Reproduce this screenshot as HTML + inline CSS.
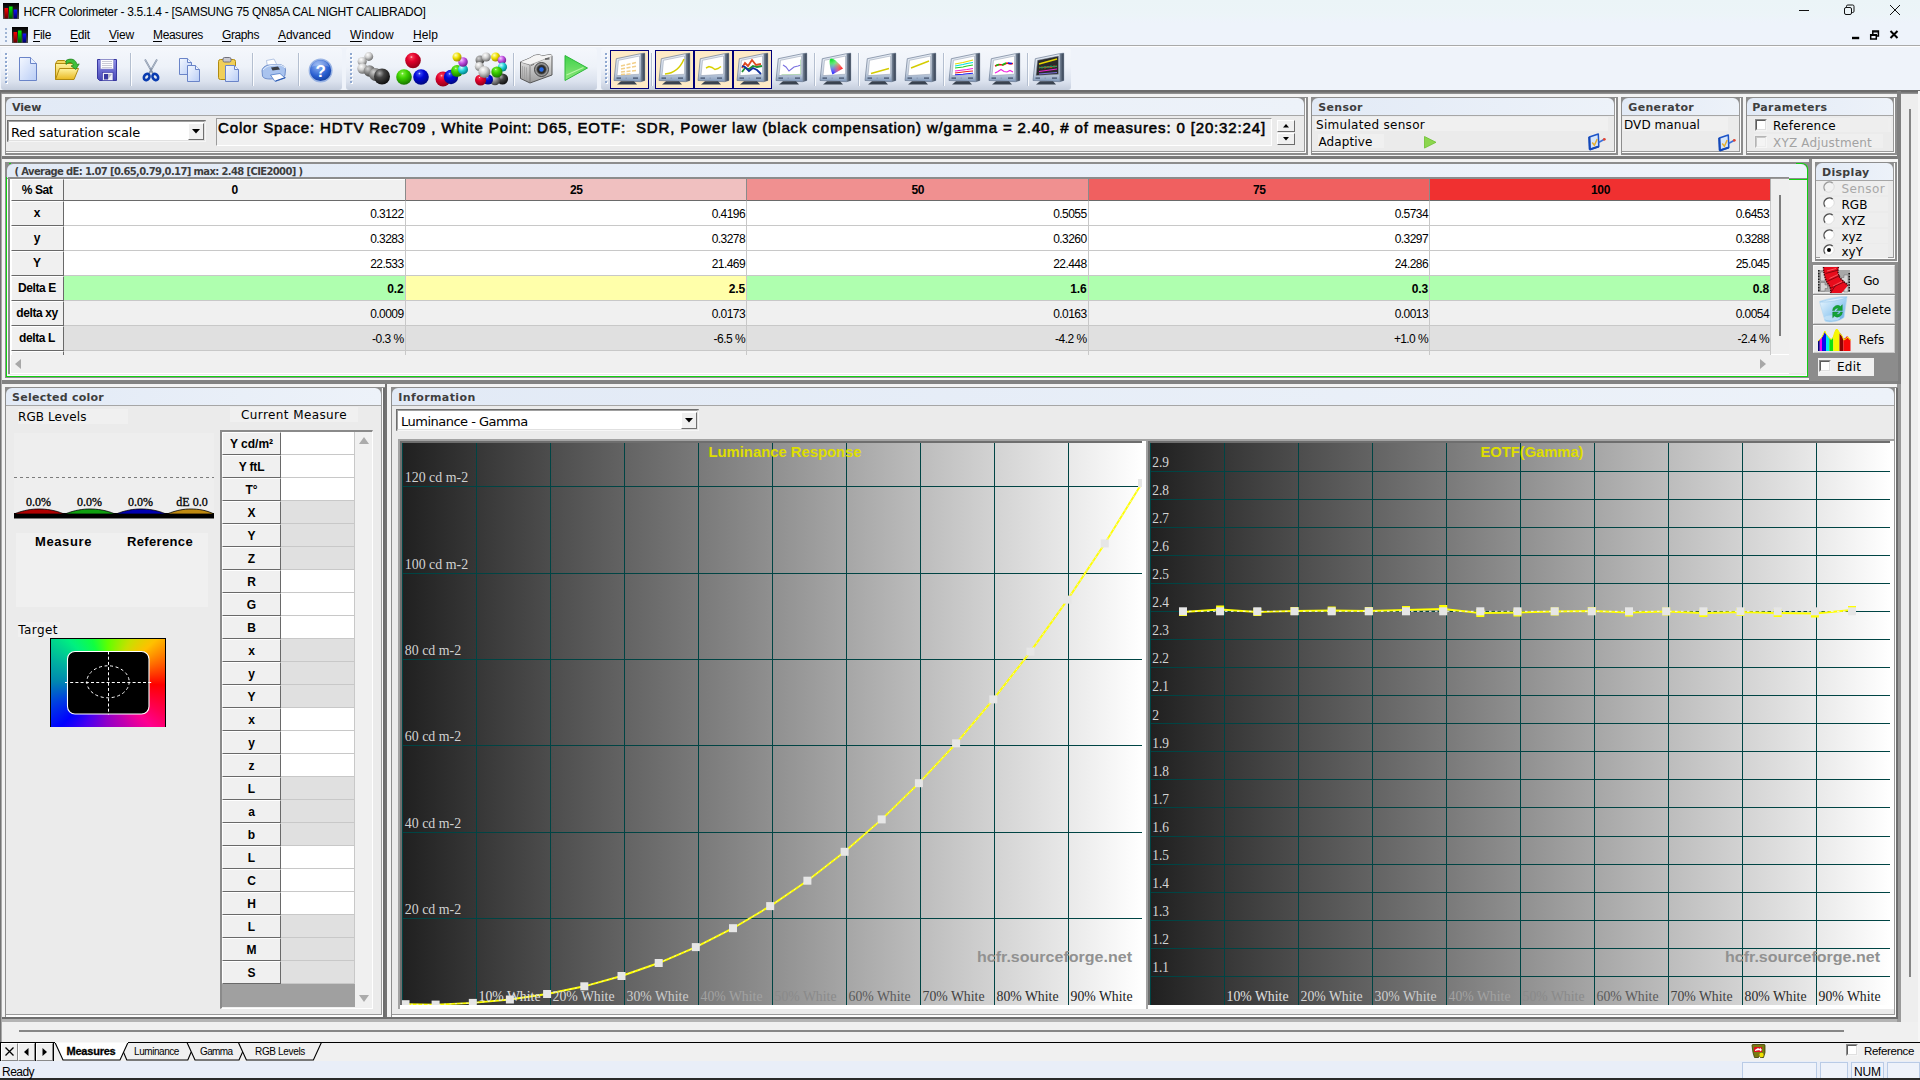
<!DOCTYPE html><html><head><meta charset="utf-8"><title>HCFR Colorimeter</title><style>html,body{margin:0;padding:0;width:1920px;height:1080px;overflow:hidden;background:#f0f0f0;}body{position:relative;font-family:"Liberation Sans",sans-serif;}#app{position:absolute;left:0;top:0;width:1920px;height:1080px;overflow:hidden;}#app>div,#app>span,#app>svg{position:absolute;display:block;}svg{overflow:visible}</style></head><body><div id="app">
<div style="left:0px;top:0px;width:1920px;height:23px;background:linear-gradient(#ebf4f7 0%,#ecf4f8 60%,#eef3fb 100%);"></div>
<svg style="left:3px;top:3px" width="16" height="16" viewBox="0 0 16 16"><defs><linearGradient id="ig" x1="0" y1="0" x2="0" y2="1"><stop offset="0" stop-color="#000"/><stop offset="0.5" stop-color="#222"/><stop offset="1" stop-color="#555"/></linearGradient><linearGradient id="ir" x1="0" y1="0" x2="0" y2="1"><stop offset="0" stop-color="#f00"/><stop offset="1" stop-color="#600"/></linearGradient><linearGradient id="igr" x1="0" y1="0" x2="0" y2="1"><stop offset="0" stop-color="#0e0"/><stop offset="1" stop-color="#050"/></linearGradient><linearGradient id="ib" x1="0" y1="0" x2="0" y2="1"><stop offset="0" stop-color="#11f"/><stop offset="1" stop-color="#006"/></linearGradient></defs><rect width="16" height="16" fill="url(#ig)"/><rect x="1.5" y="5" width="3.6" height="10.5" fill="url(#ir)"/><rect x="6" y="3.5" width="3.6" height="12" fill="url(#igr)"/><rect x="10.6" y="6.5" width="3.6" height="9" fill="url(#ib)"/></svg>
<span style="left:23.50px;top:4.00px;font:12px/17px 'Liberation Sans',sans-serif;color:#000;white-space:pre;letter-spacing:-0.300px;">HCFR Colorimeter - 3.5.1.4 - [SAMSUNG 75 QN85A CAL NIGHT CALIBRADO]</span>
<svg style="left:1790px;top:0" width="130" height="23" viewBox="0 0 130 23" fill="none" stroke="#111" stroke-width="1"><path d="M9 10.5h10"/><rect x="54.5" y="7.5" width="7" height="7" rx="1.5"/><path d="M56.5 7.500v-1.200a1.300 1.300 0 0 1 1.300-1.300h4.900a1.300 1.300 0 0 1 1.300 1.300v4.900a1.300 1.300 0 0 1-1.300 1.300h-1.200"/><path d="M100 5l10 10M110 5l-10 10"/></svg>
<div style="left:0px;top:23px;width:1920px;height:23px;background:#eef3fb;"></div>
<div style="left:0px;top:45px;width:1920px;height:1px;background:#a9a9a9;"></div>
<div style="left:0px;top:46px;width:1920px;height:1px;background:#fdfdfe;"></div>
<div style="left:5px;top:28px;width:2px;height:2px;background:#9fb4d4;"></div>
<div style="left:5px;top:32px;width:2px;height:2px;background:#9fb4d4;"></div>
<div style="left:5px;top:36px;width:2px;height:2px;background:#9fb4d4;"></div>
<div style="left:5px;top:40px;width:2px;height:2px;background:#9fb4d4;"></div>
<svg style="left:12px;top:27px" width="16" height="16" viewBox="0 0 16 16"><defs><linearGradient id="ig" x1="0" y1="0" x2="0" y2="1"><stop offset="0" stop-color="#000"/><stop offset="0.5" stop-color="#222"/><stop offset="1" stop-color="#555"/></linearGradient><linearGradient id="ir" x1="0" y1="0" x2="0" y2="1"><stop offset="0" stop-color="#f00"/><stop offset="1" stop-color="#600"/></linearGradient><linearGradient id="igr" x1="0" y1="0" x2="0" y2="1"><stop offset="0" stop-color="#0e0"/><stop offset="1" stop-color="#050"/></linearGradient><linearGradient id="ib" x1="0" y1="0" x2="0" y2="1"><stop offset="0" stop-color="#11f"/><stop offset="1" stop-color="#006"/></linearGradient></defs><rect width="16" height="16" fill="url(#ig)"/><rect x="1.5" y="5" width="3.6" height="10.5" fill="url(#ir)"/><rect x="6" y="3.5" width="3.6" height="12" fill="url(#igr)"/><rect x="10.6" y="6.5" width="3.6" height="9" fill="url(#ib)"/></svg>
<span style="left:33.00px;top:27.00px;font:12px/17px 'Liberation Sans',sans-serif;color:#000;white-space:pre;letter-spacing:-0.334px;">File</span>
<div style="left:33px;top:41px;width:7px;height:1px;background:#000;"></div>
<span style="left:70.00px;top:27.00px;font:12px/17px 'Liberation Sans',sans-serif;color:#000;white-space:pre;letter-spacing:-0.170px;">Edit</span>
<div style="left:70px;top:41px;width:8px;height:1px;background:#000;"></div>
<span style="left:109.00px;top:27.00px;font:12px/17px 'Liberation Sans',sans-serif;color:#000;white-space:pre;letter-spacing:-0.199px;">View</span>
<div style="left:109px;top:41px;width:8px;height:1px;background:#000;"></div>
<span style="left:153.00px;top:27.00px;font:12px/17px 'Liberation Sans',sans-serif;color:#000;white-space:pre;letter-spacing:-0.336px;">Measures</span>
<div style="left:153px;top:41px;width:9px;height:1px;background:#000;"></div>
<span style="left:222.00px;top:27.00px;font:12px/17px 'Liberation Sans',sans-serif;color:#000;white-space:pre;letter-spacing:-0.392px;">Graphs</span>
<div style="left:222px;top:41px;width:9px;height:1px;background:#000;"></div>
<span style="left:278.00px;top:27.00px;font:12px/17px 'Liberation Sans',sans-serif;color:#000;white-space:pre;letter-spacing:-0.047px;">Advanced</span>
<div style="left:278px;top:41px;width:8px;height:1px;background:#000;"></div>
<span style="left:350.00px;top:27.00px;font:12px/17px 'Liberation Sans',sans-serif;color:#000;white-space:pre;letter-spacing:0.220px;">Window</span>
<div style="left:350px;top:41px;width:12px;height:1px;background:#000;"></div>
<span style="left:413.00px;top:27.00px;font:12px/17px 'Liberation Sans',sans-serif;color:#000;white-space:pre;letter-spacing:0.080px;">Help</span>
<div style="left:413px;top:41px;width:9px;height:1px;background:#000;"></div>
<svg style="left:1848px;top:26px" width="60" height="18" viewBox="0 0 60 18" fill="none" stroke="#000" stroke-width="2"><path d="M4 12h7.200" stroke-width="2.400"/><path d="M22.700 8.700h5.600v4.300h-5.600z" stroke-width="1.500"/><path d="M24.800 8.300v-3.200h5.600v4.800h-1.800" stroke-width="1.500"/><path d="M22.700 9.400h5.600M24.800 5.800h5.600" stroke-width="1.300"/><path d="M42.5 5l7 7M49.5 5l-7 7"/></svg>
<div style="left:0px;top:47px;width:1920px;height:44px;background:#eff3fa;"></div>
<div style="left:1px;top:48px;width:341px;height:42px;background:linear-gradient(#f4f7fc 0%,#eef2f9 45%,#dbe2ee 80%,#c4cddc 100%);border-radius:3px 3px 3px 3px;"></div>
<div style="left:6px;top:54px;width:2px;height:2px;background:#fff;"></div>
<div style="left:5px;top:53px;width:2px;height:2px;background:#8fa8d0;"></div>
<div style="left:6px;top:58px;width:2px;height:2px;background:#fff;"></div>
<div style="left:5px;top:57px;width:2px;height:2px;background:#8fa8d0;"></div>
<div style="left:6px;top:62px;width:2px;height:2px;background:#fff;"></div>
<div style="left:5px;top:61px;width:2px;height:2px;background:#8fa8d0;"></div>
<div style="left:6px;top:66px;width:2px;height:2px;background:#fff;"></div>
<div style="left:5px;top:65px;width:2px;height:2px;background:#8fa8d0;"></div>
<div style="left:6px;top:70px;width:2px;height:2px;background:#fff;"></div>
<div style="left:5px;top:69px;width:2px;height:2px;background:#8fa8d0;"></div>
<div style="left:6px;top:74px;width:2px;height:2px;background:#fff;"></div>
<div style="left:5px;top:73px;width:2px;height:2px;background:#8fa8d0;"></div>
<div style="left:6px;top:78px;width:2px;height:2px;background:#fff;"></div>
<div style="left:5px;top:77px;width:2px;height:2px;background:#8fa8d0;"></div>
<div style="left:6px;top:82px;width:2px;height:2px;background:#fff;"></div>
<div style="left:5px;top:81px;width:2px;height:2px;background:#8fa8d0;"></div>
<div style="left:346px;top:48px;width:251px;height:42px;background:linear-gradient(#f4f7fc 0%,#eef2f9 45%,#dbe2ee 80%,#c4cddc 100%);border-radius:3px 3px 3px 3px;"></div>
<div style="left:351px;top:54px;width:2px;height:2px;background:#fff;"></div>
<div style="left:350px;top:53px;width:2px;height:2px;background:#8fa8d0;"></div>
<div style="left:351px;top:58px;width:2px;height:2px;background:#fff;"></div>
<div style="left:350px;top:57px;width:2px;height:2px;background:#8fa8d0;"></div>
<div style="left:351px;top:62px;width:2px;height:2px;background:#fff;"></div>
<div style="left:350px;top:61px;width:2px;height:2px;background:#8fa8d0;"></div>
<div style="left:351px;top:66px;width:2px;height:2px;background:#fff;"></div>
<div style="left:350px;top:65px;width:2px;height:2px;background:#8fa8d0;"></div>
<div style="left:351px;top:70px;width:2px;height:2px;background:#fff;"></div>
<div style="left:350px;top:69px;width:2px;height:2px;background:#8fa8d0;"></div>
<div style="left:351px;top:74px;width:2px;height:2px;background:#fff;"></div>
<div style="left:350px;top:73px;width:2px;height:2px;background:#8fa8d0;"></div>
<div style="left:351px;top:78px;width:2px;height:2px;background:#fff;"></div>
<div style="left:350px;top:77px;width:2px;height:2px;background:#8fa8d0;"></div>
<div style="left:351px;top:82px;width:2px;height:2px;background:#fff;"></div>
<div style="left:350px;top:81px;width:2px;height:2px;background:#8fa8d0;"></div>
<div style="left:601px;top:48px;width:470px;height:42px;background:linear-gradient(#f4f7fc 0%,#eef2f9 45%,#dbe2ee 80%,#c4cddc 100%);border-radius:3px 3px 3px 3px;"></div>
<div style="left:606px;top:54px;width:2px;height:2px;background:#fff;"></div>
<div style="left:605px;top:53px;width:2px;height:2px;background:#8fa8d0;"></div>
<div style="left:606px;top:58px;width:2px;height:2px;background:#fff;"></div>
<div style="left:605px;top:57px;width:2px;height:2px;background:#8fa8d0;"></div>
<div style="left:606px;top:62px;width:2px;height:2px;background:#fff;"></div>
<div style="left:605px;top:61px;width:2px;height:2px;background:#8fa8d0;"></div>
<div style="left:606px;top:66px;width:2px;height:2px;background:#fff;"></div>
<div style="left:605px;top:65px;width:2px;height:2px;background:#8fa8d0;"></div>
<div style="left:606px;top:70px;width:2px;height:2px;background:#fff;"></div>
<div style="left:605px;top:69px;width:2px;height:2px;background:#8fa8d0;"></div>
<div style="left:606px;top:74px;width:2px;height:2px;background:#fff;"></div>
<div style="left:605px;top:73px;width:2px;height:2px;background:#8fa8d0;"></div>
<div style="left:606px;top:78px;width:2px;height:2px;background:#fff;"></div>
<div style="left:605px;top:77px;width:2px;height:2px;background:#8fa8d0;"></div>
<div style="left:606px;top:82px;width:2px;height:2px;background:#fff;"></div>
<div style="left:605px;top:81px;width:2px;height:2px;background:#8fa8d0;"></div>
<div style="left:130px;top:53px;width:1px;height:33px;background:#b4bfd0;"></div>
<div style="left:131px;top:53px;width:1px;height:33px;background:#fbfcfe;"></div>
<div style="left:252px;top:53px;width:1px;height:33px;background:#b4bfd0;"></div>
<div style="left:253px;top:53px;width:1px;height:33px;background:#fbfcfe;"></div>
<div style="left:298px;top:53px;width:1px;height:33px;background:#b4bfd0;"></div>
<div style="left:299px;top:53px;width:1px;height:33px;background:#fbfcfe;"></div>
<div style="left:513px;top:53px;width:1px;height:33px;background:#b4bfd0;"></div>
<div style="left:514px;top:53px;width:1px;height:33px;background:#fbfcfe;"></div>
<div style="left:651px;top:53px;width:1px;height:33px;background:#b4bfd0;"></div>
<div style="left:652px;top:53px;width:1px;height:33px;background:#fbfcfe;"></div>
<div style="left:814px;top:53px;width:1px;height:33px;background:#b4bfd0;"></div>
<div style="left:815px;top:53px;width:1px;height:33px;background:#fbfcfe;"></div>
<div style="left:858px;top:53px;width:1px;height:33px;background:#b4bfd0;"></div>
<div style="left:859px;top:53px;width:1px;height:33px;background:#fbfcfe;"></div>
<div style="left:943px;top:53px;width:1px;height:33px;background:#b4bfd0;"></div>
<div style="left:944px;top:53px;width:1px;height:33px;background:#fbfcfe;"></div>
<div style="left:1027px;top:53px;width:1px;height:33px;background:#b4bfd0;"></div>
<div style="left:1028px;top:53px;width:1px;height:33px;background:#fbfcfe;"></div>
<div style="left:0px;top:90px;width:1920px;height:1px;background:#6e6e6e;"></div>
<svg width="0" height="0" style="left:0;top:0"><defs>
<linearGradient id="pg" x1="0" y1="0" x2="1" y2="1"><stop offset="0" stop-color="#f4f8ff"/><stop offset="1" stop-color="#b9cdf6"/></linearGradient>
<linearGradient id="mb" x1="0" y1="0" x2="0" y2="1"><stop offset="0" stop-color="#e9eef5"/><stop offset="0.7" stop-color="#c9d4e3"/><stop offset="1" stop-color="#7f97b8"/></linearGradient>
<linearGradient id="ms" x1="0" y1="0" x2="1" y2="0"><stop offset="0" stop-color="#7f8da0"/><stop offset="1" stop-color="#2e3a4c"/></linearGradient>
<radialGradient id="bR" cx="0.4" cy="0.28" r="0.75"><stop offset="0" stop-color="#ffd0d8"/><stop offset="0.12" stop-color="#f4304c"/><stop offset="0.4" stop-color="#e0002c"/><stop offset="1" stop-color="#8c0018"/></radialGradient>
<radialGradient id="bG" cx="0.4" cy="0.28" r="0.75"><stop offset="0" stop-color="#e0ffd0"/><stop offset="0.12" stop-color="#70e830"/><stop offset="0.4" stop-color="#3cd000"/><stop offset="1" stop-color="#157000"/></radialGradient>
<radialGradient id="bB" cx="0.4" cy="0.28" r="0.75"><stop offset="0" stop-color="#d0d8ff"/><stop offset="0.12" stop-color="#3040f0"/><stop offset="0.4" stop-color="#0008d8"/><stop offset="1" stop-color="#000878"/></radialGradient>
<radialGradient id="bW" cx="0.38" cy="0.3" r="0.72"><stop offset="0" stop-color="#fff"/><stop offset="0.45" stop-color="#d0d0d0"/><stop offset="1" stop-color="#6c6c6c"/></radialGradient>
<radialGradient id="bK" cx="0.35" cy="0.3" r="0.7"><stop offset="0" stop-color="#aaa"/><stop offset="0.4" stop-color="#444"/><stop offset="1" stop-color="#111"/></radialGradient>
<radialGradient id="bM" cx="0.35" cy="0.3" r="0.7"><stop offset="0" stop-color="#d0d0d0"/><stop offset="0.5" stop-color="#888"/><stop offset="1" stop-color="#444"/></radialGradient>
<radialGradient id="bY" cx="0.35" cy="0.3" r="0.7"><stop offset="0" stop-color="#ffffc0"/><stop offset="0.5" stop-color="#f0e000"/><stop offset="1" stop-color="#a09000"/></radialGradient>
<radialGradient id="bP" cx="0.35" cy="0.3" r="0.7"><stop offset="0" stop-color="#f4c8ff"/><stop offset="0.5" stop-color="#c050e0"/><stop offset="1" stop-color="#702090"/></radialGradient>
<radialGradient id="bC" cx="0.35" cy="0.3" r="0.7"><stop offset="0" stop-color="#d0ffff"/><stop offset="0.5" stop-color="#20d0d8"/><stop offset="1" stop-color="#008088"/></radialGradient>
<radialGradient id="hq" cx="0.4" cy="0.3" r="0.75"><stop offset="0" stop-color="#8fb4f4"/><stop offset="0.6" stop-color="#2a5fd0"/><stop offset="1" stop-color="#103a98"/></radialGradient>
<linearGradient id="fl" x1="0" y1="0" x2="0" y2="1"><stop offset="0" stop-color="#fff3a0"/><stop offset="1" stop-color="#e8b820"/></linearGradient>
<linearGradient id="sv" x1="0" y1="0" x2="0" y2="1"><stop offset="0" stop-color="#8e8ee8"/><stop offset="1" stop-color="#4848b8"/></linearGradient>
<linearGradient id="gp" x1="0" y1="0" x2="0" y2="1"><stop offset="0" stop-color="#3fd24a"/><stop offset="1" stop-color="#8ee67a"/></linearGradient>
<linearGradient id="cam" x1="0" y1="0" x2="0" y2="1"><stop offset="0" stop-color="#f2f2f2"/><stop offset="1" stop-color="#9a9a9a"/></linearGradient>
</defs></svg>
<svg style="left:18px;top:56px" width="20" height="26" viewBox="0 0 20 26"><path d="M1.5 1.5h11l6 6v17h-17z" fill="url(#pg)" stroke="#6a84c8"/><path d="M12.5 1.5v6h6" fill="#e8f0ff" stroke="#6a84c8"/></svg>
<svg style="left:54px;top:57px" width="26" height="24" viewBox="0 0 26 24"><path d="M1.5 6.5l2-3h7l2 2h8v4" fill="#f4d860" stroke="#b08a10"/><path d="M1.5 22.5v-16h19l-0 4" fill="url(#fl)" stroke="#b08a10"/><path d="M1.5 22.5l4-11h19l-4.5 11z" fill="url(#fl)" stroke="#b08a10"/><path d="M12 3.5c5-3 10-1 11 4l2.2-.6-3.4 5.6-4.8-3.6 2.4-.5c-1-3-4-4-7.400-.9z" fill="#3fc03a" stroke="#1c7a1a" stroke-width=".7"/></svg>
<svg style="left:96px;top:58px" width="22" height="24" viewBox="0 0 22 24"><path d="M1.500 1.500h19v21h-17l-2-2z" fill="url(#sv)" stroke="#3838a0"/><rect x="4.500" y="1.500" width="13" height="9.500" fill="#fdfdff" stroke="#8c8cc8" stroke-width=".6"/><path d="M6 3.500h10M6 5.500h10M6 7.500h10M6 9.500h10" stroke="#b4b4c4" stroke-width=".7"/><rect x="6.500" y="14.500" width="10.500" height="8" fill="#f0f0f8" stroke="#3838a0" stroke-width=".6"/><path d="M8 16h4v5.500h-4z" fill="#3a3aa0"/><path d="M12 16h4l-4 5.500z" fill="#b8b8cc"/></svg>
<svg style="left:141px;top:57px" width="20" height="26" viewBox="0 0 20 26"><path d="M4 2.500l8.500 15M16 2.500l-8.500 15" stroke="#8290a6" stroke-width="1.700" fill="none"/><path d="M4 2.500l5 9M16 2.500l-5 9" stroke="#c4ccd8" stroke-width=".7" fill="none"/><ellipse cx="5.700" cy="20" rx="2.600" ry="3.300" fill="none" stroke="#0a3cb0" stroke-width="2.600" transform="rotate(35 5.700 20)"/><ellipse cx="14.300" cy="20" rx="2.600" ry="3.300" fill="none" stroke="#0a3cb0" stroke-width="2.600" transform="rotate(-35 14.300 20)"/></svg>
<svg style="left:178px;top:57px" width="24" height="26" viewBox="0 0 24 26"><path d="M1.500 1.500h8l4 4v12h-12z" fill="url(#pg)" stroke="#6a84c8"/><path d="M9.500 1.500v4h4" fill="#eef4ff" stroke="#6a84c8"/><path d="M9.500 8.500h8l4 4v12h-12z" fill="url(#pg)" stroke="#6a84c8"/><path d="M17.500 8.500v4h4" fill="#eef4ff" stroke="#6a84c8"/></svg>
<svg style="left:217px;top:56px" width="24" height="27" viewBox="0 0 24 27"><rect x="1.500" y="3.500" width="17" height="20" rx="2" fill="#f0cf58" stroke="#b08a10"/><rect x="6" y="1.500" width="8" height="4.500" rx="1.500" fill="#c8c8d0" stroke="#70707c"/><path d="M8.500 9.500h9l4 4v12h-13z" fill="url(#pg)" stroke="#6a84c8"/><path d="M17.500 9.500v4h4" fill="#eef4ff" stroke="#6a84c8"/></svg>
<svg style="left:261px;top:58px" width="26" height="25" viewBox="0 0 26 25"><path d="M6.500 9l-1-6.500 7.500-1.500 3.500 7z" fill="#fff" stroke="#9ab0d8" stroke-width=".7"/><path d="M1 13c0-3 3-5.500 7-6l9-.5c4 0 7.500 2 7.500 5.500l-.5 5c-.5 2-2 3-5 3.500l-10 .5c-4 0-7-1-7.500-3z" fill="#a9c3ee" stroke="#5a7cc0" stroke-width=".8"/><path d="M2 12c2-2.500 5-4 8-4.500l7-.5c3 0 5.500 1 7 3" fill="none" stroke="#e4eefc" stroke-width="1"/><path d="M10 9.500l7-1 2 3-7.500 1z" fill="#3c4048"/><path d="M9.500 17l9.500-1.500 5 4.500-10 3.500z" fill="#fff" stroke="#4a78c8" stroke-width=".8"/><path d="M14.500 23l10-3.500" stroke="#2a58b0" stroke-width="1.200"/></svg>
<svg style="left:308px;top:58px" width="25" height="25" viewBox="0 0 25 25"><circle cx="12.600" cy="12.500" r="11.300" fill="url(#hq)" stroke="#9ab4e4" stroke-width="1.400"/><path d="M3.500 9a9.500 9.500 0 0 1 18 0c-5-2.500-13-2.500-18 0z" fill="#fff" opacity=".22"/><text x="12.600" y="18.600" font-family="Liberation Sans,sans-serif" font-weight="bold" font-size="17" text-anchor="middle" fill="#fff">?</text></svg>
<svg style="left:357px;top:52px" width="34" height="34" viewBox="0 0 34 34"><circle cx="11.8" cy="4.5" r="4.4" fill="url(#bW)"/><circle cx="5.2" cy="9.5" r="4.6" fill="url(#bW)"/><circle cx="5.5" cy="16.5" r="5.2" fill="url(#bW)"/><circle cx="12.5" cy="19" r="5.8" fill="url(#bM)"/><circle cx="18.5" cy="22.5" r="6.4" fill="url(#bM)"/><circle cx="25" cy="24.5" r="8" fill="url(#bK)"/></svg>
<svg style="left:395px;top:52px" width="34" height="34" viewBox="0 0 34 34"><circle cx="18" cy="8.5" r="7.8" fill="url(#bR)"/><circle cx="9" cy="25" r="7.8" fill="url(#bG)"/><circle cx="26" cy="25" r="7.8" fill="url(#bB)"/></svg>
<svg style="left:434px;top:52px" width="36" height="34" viewBox="0 0 36 34"><circle cx="9" cy="27" r="7.5" fill="url(#bR)"/><circle cx="17" cy="25" r="7.2" fill="url(#bB)"/><circle cx="23" cy="19" r="6" fill="url(#bG)"/><circle cx="29" cy="17.5" r="5" fill="url(#bC)"/><circle cx="29" cy="10" r="4.8" fill="url(#bP)"/><circle cx="23" cy="5" r="4.5" fill="url(#bY)"/></svg>
<svg style="left:473px;top:52px" width="36" height="34" viewBox="0 0 36 34"><circle cx="7" cy="8" r="4.5" fill="url(#bM)"/><circle cx="13.2" cy="5" r="4.6" fill="url(#bW)"/><circle cx="22.6" cy="5" r="4.5" fill="url(#bY)"/><circle cx="28.9" cy="8" r="4.3" fill="url(#bP)"/><circle cx="29.5" cy="15" r="4.6" fill="url(#bC)"/><circle cx="29.5" cy="27" r="5.6" fill="url(#bK)"/><circle cx="22" cy="28" r="5.2" fill="url(#bM)"/><circle cx="23.9" cy="20" r="5.6" fill="url(#bG)"/><circle cx="15" cy="27.6" r="5" fill="url(#bB)"/><circle cx="7.6" cy="28" r="5.6" fill="url(#bR)"/><circle cx="6.4" cy="14.5" r="4.6" fill="url(#bW)"/><circle cx="11.4" cy="20" r="6" fill="url(#bW)"/></svg>
<svg style="left:519px;top:53px" width="34" height="32" viewBox="0 0 34 32"><path d="M1.500 9l9.500-4 4-2.500 5.500-1 2 1.500 9.500-1.500 1 1.500v19l-22 8-9.500-4.500z" fill="url(#cam)" stroke="#4a4a4a" stroke-width=".9"/><path d="M1.500 9l9.500 3v18" fill="none" stroke="#6a6a6a" stroke-width=".7"/><path d="M11 12l21-8.500" fill="none" stroke="#8a8a8a" stroke-width=".7"/><path d="M1.500 9l9.500-4 4-2.500 5.500-1 2 1.500 9.500-1.500 1 1.500-22 8.500z" fill="#f6f6f6" opacity=".9"/><path d="M3.500 13v12.500M5.500 13.700v12.500M7.500 14.400v12.600" stroke="#a0a0a0" stroke-width=".8"/><circle cx="22.500" cy="16.500" r="7" fill="#9a9a9a" stroke="#3a3a3a" stroke-width=".9"/><circle cx="22.500" cy="16.500" r="4.800" fill="#2c2c2c" stroke="#6a6a6a" stroke-width=".7"/><circle cx="22.500" cy="16.500" r="2.200" fill="#2468e8"/><rect x="26" y="4.800" width="4.500" height="2" fill="#666" transform="rotate(-9 28 6)"/><path d="M12 12.500l3-1.200" stroke="#777" stroke-width="1"/></svg>
<svg style="left:563px;top:54px" width="26" height="28" viewBox="0 0 26 28"><path d="M2 1.500l22.500 12.500-22.500 12.500z" fill="url(#gp)" stroke="#2cb83a" stroke-width="1"/><path d="M3.500 21l17-7.500" stroke="#b8f4a8" stroke-width="1.200" fill="none"/></svg>
<div style="left:610px;top:50px;width:39px;height:39px;background:#fdeac6;border:1.5px solid #000078;box-sizing:border-box;"></div>
<svg style="left:614px;top:53px" width="32" height="32" viewBox="0 0 32 32"><path d="M2.300 5.700l24.200-5 4.200-.5v27.300l-4.200 1.200-26.500-1.200z" fill="url(#mb)" stroke="#6b7b94" stroke-width=".7"/><path d="M26.500 .7l4.200-.5v27.300l-4.200 1.200z" fill="url(#ms)"/><path d="M4.500 7.300l21-4.300v18.200l-22.500 1.400z" fill="#fff" stroke="#8a96aa" stroke-width=".5"/><rect x="2.500" y="24.300" width="4.500" height="1.700" fill="#5a6a84"/><rect x="19" y="24.300" width="5" height="1.700" fill="#5a6a84"/><rect x="11.500" y="24.600" width="1.500" height="1.200" fill="#8a9ab4"/><path d="M7 28.300h13l3 3.300h-20z" fill="#39424f"/><g stroke="#f2cf8a" stroke-width="1.400"><path d="M7 13l4-1M12.500 11.700l4-1M18 10.500l4-1M7 16l4-.8M12.500 15l4-.8M18 14l4-.8M7 19l4-.5M12.500 18.500l4-.5M18 18l4-.5M7 21.500l4-.3M12.500 21.200l4-.3"/></g></svg>
<div style="left:655px;top:50px;width:39px;height:39px;background:#fdeac6;border:1.5px solid #000078;box-sizing:border-box;"></div>
<svg style="left:659px;top:53px" width="32" height="32" viewBox="0 0 32 32"><path d="M2.300 5.700l24.200-5 4.200-.5v27.300l-4.200 1.200-26.500-1.200z" fill="url(#mb)" stroke="#6b7b94" stroke-width=".7"/><path d="M26.500 .7l4.200-.5v27.300l-4.200 1.200z" fill="url(#ms)"/><path d="M4.500 7.300l21-4.300v18.200l-22.500 1.400z" fill="#fff" stroke="#8a96aa" stroke-width=".5"/><rect x="2.500" y="24.300" width="4.500" height="1.700" fill="#5a6a84"/><rect x="19" y="24.300" width="5" height="1.700" fill="#5a6a84"/><rect x="11.500" y="24.600" width="1.500" height="1.200" fill="#8a9ab4"/><path d="M7 28.300h13l3 3.300h-20z" fill="#39424f"/><path d="M6 21c7-.5 14-3 19-15" stroke="#d4cc00" stroke-width="1.500" fill="none"/></svg>
<div style="left:694px;top:50px;width:39px;height:39px;background:#fdeac6;border:1.5px solid #000078;box-sizing:border-box;"></div>
<svg style="left:698px;top:53px" width="32" height="32" viewBox="0 0 32 32"><path d="M2.300 5.700l24.200-5 4.200-.5v27.300l-4.200 1.200-26.500-1.200z" fill="url(#mb)" stroke="#6b7b94" stroke-width=".7"/><path d="M26.500 .7l4.200-.5v27.300l-4.200 1.200z" fill="url(#ms)"/><path d="M4.500 7.300l21-4.300v18.200l-22.500 1.400z" fill="#fff" stroke="#8a96aa" stroke-width=".5"/><rect x="2.500" y="24.300" width="4.500" height="1.700" fill="#5a6a84"/><rect x="19" y="24.300" width="5" height="1.700" fill="#5a6a84"/><rect x="11.500" y="24.600" width="1.500" height="1.200" fill="#8a9ab4"/><path d="M7 28.300h13l3 3.300h-20z" fill="#39424f"/><path d="M8 15l3-1.500 3 1 3 2 3-1 3-2" stroke="#d8d000" stroke-width="1.500" fill="none"/></svg>
<div style="left:733px;top:50px;width:39px;height:39px;background:#fdeac6;border:1.5px solid #000078;box-sizing:border-box;"></div>
<svg style="left:737px;top:53px" width="32" height="32" viewBox="0 0 32 32"><path d="M2.300 5.700l24.200-5 4.200-.5v27.300l-4.200 1.200-26.500-1.200z" fill="url(#mb)" stroke="#6b7b94" stroke-width=".7"/><path d="M26.500 .7l4.200-.5v27.300l-4.200 1.200z" fill="url(#ms)"/><path d="M4.500 7.300l21-4.300v18.200l-22.500 1.400z" fill="#fff" stroke="#8a96aa" stroke-width=".5"/><rect x="2.500" y="24.300" width="4.500" height="1.700" fill="#5a6a84"/><rect x="19" y="24.300" width="5" height="1.700" fill="#5a6a84"/><rect x="11.500" y="24.600" width="1.500" height="1.200" fill="#8a9ab4"/><path d="M7 28.300h13l3 3.300h-20z" fill="#39424f"/><path d="M5 15l3-5 3 3 4-6 4 5 5-1" stroke="#e04820" stroke-width="1.800" fill="none"/><path d="M5 19l3-4 4 1 4-3 4 1 5-1" stroke="#209030" stroke-width="1.800" fill="none"/><path d="M5 13l3 1 4 4 4-3 4 2 4 4" stroke="#1030a0" stroke-width="1.800" fill="none"/></svg>
<svg style="left:776px;top:53px" width="32" height="32" viewBox="0 0 32 32"><path d="M2.300 5.700l24.200-5 4.200-.5v27.300l-4.200 1.200-26.500-1.200z" fill="url(#mb)" stroke="#6b7b94" stroke-width=".7"/><path d="M26.500 .7l4.200-.5v27.300l-4.200 1.200z" fill="url(#ms)"/><path d="M4.500 7.300l21-4.300v18.200l-22.500 1.400z" fill="#fff" stroke="#8a96aa" stroke-width=".5"/><rect x="2.500" y="24.300" width="4.500" height="1.700" fill="#5a6a84"/><rect x="19" y="24.300" width="5" height="1.700" fill="#5a6a84"/><rect x="11.500" y="24.600" width="1.500" height="1.200" fill="#8a9ab4"/><path d="M7 28.300h13l3 3.300h-20z" fill="#39424f"/><path d="M7 12l3 2 3 4 5-4 4-1 3-1" stroke="#7a70e0" stroke-width="1.100" fill="none"/><path d="M5.500 21.500h19v-15" stroke="#b0d8b0" stroke-width=".8" fill="none"/></svg>
<svg style="left:820px;top:53px" width="32" height="32" viewBox="0 0 32 32"><path d="M2.300 5.700l24.200-5 4.200-.5v27.300l-4.200 1.200-26.500-1.200z" fill="url(#mb)" stroke="#6b7b94" stroke-width=".7"/><path d="M26.500 .7l4.200-.5v27.300l-4.200 1.200z" fill="url(#ms)"/><path d="M4.500 7.300l21-4.300v18.200l-22.500 1.400z" fill="#fff" stroke="#8a96aa" stroke-width=".5"/><rect x="2.500" y="24.300" width="4.500" height="1.700" fill="#5a6a84"/><rect x="19" y="24.300" width="5" height="1.700" fill="#5a6a84"/><rect x="11.500" y="24.600" width="1.500" height="1.200" fill="#8a9ab4"/><path d="M7 28.300h13l3 3.300h-20z" fill="#39424f"/><defs><radialGradient id="gG" cx="11" cy="6" r="13" gradientUnits="userSpaceOnUse"><stop offset="0" stop-color="#00e020"/><stop offset="1" stop-color="#00e020" stop-opacity="0"/></radialGradient><radialGradient id="gB" cx="12.500" cy="21" r="11" gradientUnits="userSpaceOnUse"><stop offset="0" stop-color="#2020ff"/><stop offset="1" stop-color="#2020ff" stop-opacity="0"/></radialGradient><radialGradient id="gR" cx="23" cy="15.500" r="10" gradientUnits="userSpaceOnUse"><stop offset="0" stop-color="#ff1010"/><stop offset="1" stop-color="#ff1010" stop-opacity="0"/></radialGradient></defs><path id="gam" d="M11 5.500c-2.500 0-1.500 9 1.500 16l10.500-6c-4-5-8.500-10-12-10z" fill="#fff"/><path d="M11 5.500c-2.500 0-1.500 9 1.500 16l10.500-6c-4-5-8.500-10-12-10z" fill="url(#gG)"/><path d="M11 5.500c-2.500 0-1.500 9 1.500 16l10.500-6c-4-5-8.500-10-12-10z" fill="url(#gB)"/><path d="M11 5.500c-2.500 0-1.500 9 1.500 16l10.500-6c-4-5-8.500-10-12-10z" fill="url(#gR)"/></svg>
<svg style="left:865px;top:53px" width="32" height="32" viewBox="0 0 32 32"><path d="M2.300 5.700l24.200-5 4.200-.5v27.300l-4.200 1.200-26.500-1.200z" fill="url(#mb)" stroke="#6b7b94" stroke-width=".7"/><path d="M26.500 .7l4.200-.5v27.300l-4.200 1.200z" fill="url(#ms)"/><path d="M4.500 7.300l21-4.300v18.200l-22.500 1.400z" fill="#fff" stroke="#8a96aa" stroke-width=".5"/><rect x="2.500" y="24.300" width="4.500" height="1.700" fill="#5a6a84"/><rect x="19" y="24.300" width="5" height="1.700" fill="#5a6a84"/><rect x="11.500" y="24.600" width="1.500" height="1.200" fill="#8a9ab4"/><path d="M7 28.300h13l3 3.300h-20z" fill="#39424f"/><path d="M6 20.500l18-5" stroke="#d4cc00" stroke-width="1.500" fill="none"/></svg>
<svg style="left:905px;top:53px" width="32" height="32" viewBox="0 0 32 32"><path d="M2.300 5.700l24.200-5 4.200-.5v27.300l-4.200 1.200-26.500-1.200z" fill="url(#mb)" stroke="#6b7b94" stroke-width=".7"/><path d="M26.500 .7l4.200-.5v27.300l-4.200 1.200z" fill="url(#ms)"/><path d="M4.500 7.300l21-4.300v18.200l-22.500 1.400z" fill="#fff" stroke="#8a96aa" stroke-width=".5"/><rect x="2.500" y="24.300" width="4.500" height="1.700" fill="#5a6a84"/><rect x="19" y="24.300" width="5" height="1.700" fill="#5a6a84"/><rect x="11.500" y="24.600" width="1.500" height="1.200" fill="#8a9ab4"/><path d="M7 28.300h13l3 3.300h-20z" fill="#39424f"/><path d="M6 15l18-7" stroke="#d4cc00" stroke-width="1.500" fill="none"/></svg>
<svg style="left:949px;top:53px" width="32" height="32" viewBox="0 0 32 32"><path d="M2.300 5.700l24.200-5 4.200-.5v27.300l-4.200 1.200-26.500-1.200z" fill="url(#mb)" stroke="#6b7b94" stroke-width=".7"/><path d="M26.500 .7l4.200-.5v27.300l-4.200 1.200z" fill="url(#ms)"/><path d="M4.500 7.300l21-4.300v18.200l-22.500 1.400z" fill="#fff" stroke="#8a96aa" stroke-width=".5"/><rect x="2.500" y="24.300" width="4.500" height="1.700" fill="#5a6a84"/><rect x="19" y="24.300" width="5" height="1.700" fill="#5a6a84"/><rect x="11.500" y="24.600" width="1.500" height="1.200" fill="#8a9ab4"/><path d="M7 28.300h13l3 3.300h-20z" fill="#39424f"/><g fill="none" stroke-width="1.100"><path d="M6 11l8-1.500 4-1 6-1.500" stroke="#e8d800"/><path d="M6 13l8-1.500 4-1 6-1" stroke="#00e0e0"/><path d="M6 15l8-1 4-1 6-1" stroke="#20d020"/><path d="M6 18l8-1 4-.5 6-1" stroke="#f020d0"/><path d="M6 20l8-1 4-.5 6-.5" stroke="#f02020"/><path d="M6 21.800l8-.6 4-.5 6-.5" stroke="#2020f0"/></g></svg>
<svg style="left:989px;top:53px" width="32" height="32" viewBox="0 0 32 32"><path d="M2.300 5.700l24.200-5 4.200-.5v27.300l-4.200 1.200-26.500-1.200z" fill="url(#mb)" stroke="#6b7b94" stroke-width=".7"/><path d="M26.500 .7l4.200-.5v27.300l-4.200 1.200z" fill="url(#ms)"/><path d="M4.500 7.300l21-4.300v18.200l-22.500 1.400z" fill="#fff" stroke="#8a96aa" stroke-width=".5"/><rect x="2.500" y="24.300" width="4.500" height="1.700" fill="#5a6a84"/><rect x="19" y="24.300" width="5" height="1.700" fill="#5a6a84"/><rect x="11.500" y="24.600" width="1.500" height="1.200" fill="#8a9ab4"/><path d="M7 28.300h13l3 3.300h-20z" fill="#39424f"/><g fill="none" stroke-width="1.500"><path d="M6 13l4-1.500 4 .5 4-2 3 1 3-.5" stroke="#f01010"/><path d="M7 12.500l3-1" stroke="#10c010"/><path d="M13 12l4-2" stroke="#10c010"/><path d="M19 10l4 .5" stroke="#1010e0"/><path d="M6 20l3-1.500 3-2 3 2 3 .5 3-1.500 3 1.500" stroke="#f020e0" stroke-width="1.200"/></g></svg>
<svg style="left:1033px;top:53px" width="32" height="32" viewBox="0 0 32 32"><path d="M2.300 5.700l24.200-5 4.200-.5v27.300l-4.200 1.200-26.500-1.200z" fill="url(#mb)" stroke="#6b7b94" stroke-width=".7"/><path d="M26.500 .7l4.200-.5v27.300l-4.200 1.200z" fill="url(#ms)"/><path d="M4.500 7.300l21-4.300v18.200l-22.500 1.400z" fill="#2a2a2a" stroke="#8a96aa" stroke-width=".5"/><rect x="2.500" y="24.300" width="4.500" height="1.700" fill="#5a6a84"/><rect x="19" y="24.300" width="5" height="1.700" fill="#5a6a84"/><rect x="11.500" y="24.600" width="1.500" height="1.200" fill="#8a9ab4"/><path d="M7 28.300h13l3 3.300h-20z" fill="#39424f"/><g fill="none" stroke-width="1.100"><path d="M6 11l18-5" stroke="#e8d800" stroke-width="1.500"/><path d="M6 15l3-1 3 1 3-1.500 3 1 3-1.500 3 .5" stroke="#e05020"/><path d="M6 14l3 1 3-1.500 3 1 3-1.500 3 1 3-1" stroke="#20a060"/><path d="M6 18.500l18-2.500" stroke="#f020d0"/><path d="M6 21l18-1.500" stroke="#7a70e0"/></g></svg>
<div style="left:0px;top:90px;width:1918px;height:2px;background:#6c6c6c;"></div>
<div style="left:0px;top:92px;width:1918px;height:1px;background:#7c7c7c;"></div>
<div style="left:0px;top:93px;width:1918px;height:1px;background:#909090;"></div>
<div style="left:0px;top:94px;width:1897px;height:948px;background:#f3f3f3;"></div>
<div style="left:0px;top:91px;width:1.4px;height:952px;background:#727272;"></div>
<div style="left:1.4px;top:94px;width:0.8px;height:948px;background:#a8a8a8;"></div>
<div style="left:1897px;top:91px;width:4px;height:293px;background:#808080;"></div>
<div style="left:1897px;top:384px;width:4px;height:637.5px;background:#9a9a9a;"></div>
<div style="left:1901px;top:94px;width:17px;height:948px;background:#eeeeee;"></div>
<div style="left:1909.2px;top:109px;width:2px;height:868px;background:#858585;"></div>
<div style="left:1918px;top:91px;width:2px;height:952px;background:#f6f6f6;"></div>
<div style="left:2px;top:156px;width:1895px;height:3px;background:#7a7a7a;"></div>
<div style="left:2px;top:379.5px;width:1895px;height:4px;background:#828282;"></div>
<div style="left:5px;top:97px;width:1303px;height:58px;background:#8d8d8d;"></div>
<div style="left:6px;top:98px;width:1300px;height:55px;background:#fdfdfd;"></div>
<div style="left:6px;top:98px;width:1299px;height:54px;background:#9a9a9a;"></div>
<div style="left:6px;top:98px;width:1298px;height:53px;background:#ebebeb;"></div>
<div style="left:6px;top:98px;width:1298px;height:18px;background:#8d8d8d;"></div>
<div style="left:6px;top:98px;width:1298px;height:17px;background:linear-gradient(90deg,#e2eaf6,#edf2f9);border-radius:6px 6px 0 0;"></div>
<div style="left:6px;top:115px;width:1298px;height:1px;background:#a6a6a6;"></div>
<span style="left:12.00px;top:100.00px;font:bold 11px/15px 'DejaVu Sans',sans-serif;color:#3e3e3e;white-space:pre;letter-spacing:-0.128px;">View</span>
<div style="left:7px;top:120px;width:199px;height:22px;background:#fff;border:solid;border-width:2px 1px 1px 2px;border-color:#6e6e6e #f6f6f6 #f6f6f6 #6e6e6e;box-sizing:border-box;"></div>
<div style="left:8px;top:121px;width:197px;height:20px;border:solid;border-width:1px 1px 1px 1px;border-color:#a0a0a0 #e0e0e0 #e0e0e0 #a0a0a0;box-sizing:border-box;"></div>
<div style="left:188px;top:123px;width:16px;height:17px;background:#f0f0f0;border:1px solid;border-color:#fff #707070 #707070 #fff;box-sizing:border-box;"></div>
<svg style="left:192px;top:129px" width="8" height="5" viewBox="0 0 8 5"><path d="M0 0h8l-4 4.500z" fill="#000"/></svg>
<span style="left:11.00px;top:124.00px;font:13px/18px 'DejaVu Sans',sans-serif;color:#000;white-space:pre;letter-spacing:-0.188px;">Red saturation scale</span>
<div style="left:216px;top:118px;width:1055.5px;height:28px;background:#f0f0f0;border:1px solid;border-color:#9c9c9c #fff #fff #9c9c9c;box-sizing:border-box;"></div>
<span style="left:218.00px;top:117.00px;font:15px/21px 'Liberation Sans',sans-serif;color:#000;white-space:pre;letter-spacing:0.856px;-webkit-text-stroke:0.55px #000;">Color Space: HDTV Rec709 , White Point: D65, EOTF:  SDR, Power law (black compensation) w/gamma = 2.40, # of measures: 0 [20:32:24]</span>
<div style="left:1277px;top:120px;width:18px;height:12px;background:#f0f0f0;border:1px solid;border-color:#fff #6c6c6c #6c6c6c #fff;box-sizing:border-box;"></div>
<svg style="left:1283px;top:124px" width="6" height="4" viewBox="0 0 6 4"><path d="M0 3.500h6l-3-3.500z" fill="#000"/></svg>
<div style="left:1277px;top:133px;width:18px;height:12px;background:#f0f0f0;border:1px solid;border-color:#fff #6c6c6c #6c6c6c #fff;box-sizing:border-box;"></div>
<svg style="left:1283px;top:137px" width="6" height="4" viewBox="0 0 6 4"><path d="M0 0h6l-3 3.500z" fill="#000"/></svg>
<div style="left:1311px;top:97px;width:307px;height:58px;background:#8d8d8d;"></div>
<div style="left:1312px;top:98px;width:304px;height:55px;background:#fdfdfd;"></div>
<div style="left:1312px;top:98px;width:303px;height:54px;background:#9a9a9a;"></div>
<div style="left:1312px;top:98px;width:302px;height:53px;background:#ebebeb;"></div>
<div style="left:1312px;top:98px;width:302px;height:18px;background:#8d8d8d;"></div>
<div style="left:1312px;top:98px;width:302px;height:17px;background:linear-gradient(90deg,#e2eaf6,#edf2f9);border-radius:6px 6px 0 0;"></div>
<div style="left:1312px;top:115px;width:302px;height:1px;background:#a6a6a6;"></div>
<span style="left:1318.30px;top:100.00px;font:bold 11px/15px 'DejaVu Sans',sans-serif;color:#3e3e3e;white-space:pre;letter-spacing:0.293px;">Sensor</span>
<div style="left:1315px;top:117px;width:293px;height:14px;background:#f0f0f0;"></div>
<span style="left:1316.00px;top:116.50px;font:12px/17px 'DejaVu Sans',sans-serif;color:#000;white-space:pre;letter-spacing:0.299px;">Simulated sensor</span>
<div style="left:1318px;top:134px;width:66px;height:14px;background:#f0f0f0;"></div>
<span style="left:1318.50px;top:133.50px;font:12px/17px 'DejaVu Sans',sans-serif;color:#000;white-space:pre;letter-spacing:0.111px;">Adaptive</span>
<svg style="left:1424px;top:135.5px" width="13" height="13" viewBox="0 0 13 13"><path d="M.5 .5l11.500 5.800-11.500 5.800z" fill="#8cd64e" stroke="#6cc030" stroke-width=".8"/></svg>
<svg style="left:1588px;top:132px" width="19" height="19" viewBox="0 0 19 19"><path d="M1.300 5l9-3 .5 12.500-9 3z" fill="#d6e6fb" stroke="#1c54c8" stroke-width="1.500" stroke-linejoin="round"/><path d="M1.300 5l.5 12.500" stroke="#1448b8" stroke-width="2.200"/><path d="M1.800 17.500l9-3" stroke="#1448b8" stroke-width="1.900"/><path d="M4.200 10.500l2.200 2.800 2.800-6.300" stroke="#e4b030" stroke-width="1.500" fill="none"/><path d="M10.500 10.500l5.500-3" stroke="#3a70dc" stroke-width="1.600"/><circle cx="16.300" cy="7.300" r="1.400" fill="#e04434"/></svg>
<div style="left:1621px;top:97px;width:122px;height:58px;background:#8d8d8d;"></div>
<div style="left:1622px;top:98px;width:119px;height:55px;background:#fdfdfd;"></div>
<div style="left:1622px;top:98px;width:118px;height:54px;background:#9a9a9a;"></div>
<div style="left:1622px;top:98px;width:117px;height:53px;background:#ebebeb;"></div>
<div style="left:1622px;top:98px;width:117px;height:18px;background:#8d8d8d;"></div>
<div style="left:1622px;top:98px;width:117px;height:17px;background:linear-gradient(90deg,#e2eaf6,#edf2f9);border-radius:6px 6px 0 0;"></div>
<div style="left:1622px;top:115px;width:117px;height:1px;background:#a6a6a6;"></div>
<span style="left:1628.30px;top:100.00px;font:bold 11px/15px 'DejaVu Sans',sans-serif;color:#3e3e3e;white-space:pre;letter-spacing:0.326px;">Generator</span>
<div style="left:1623px;top:117px;width:105px;height:14px;background:#f0f0f0;"></div>
<span style="left:1624.00px;top:116.50px;font:12px/17px 'DejaVu Sans',sans-serif;color:#000;white-space:pre;letter-spacing:0.076px;">DVD manual</span>
<svg style="left:1718px;top:133px" width="19" height="19" viewBox="0 0 19 19"><path d="M1.300 5l9-3 .5 12.500-9 3z" fill="#d6e6fb" stroke="#1c54c8" stroke-width="1.500" stroke-linejoin="round"/><path d="M1.300 5l.5 12.500" stroke="#1448b8" stroke-width="2.200"/><path d="M1.800 17.500l9-3" stroke="#1448b8" stroke-width="1.900"/><path d="M4.200 10.500l2.200 2.800 2.800-6.300" stroke="#e4b030" stroke-width="1.500" fill="none"/><path d="M10.500 10.500l5.500-3" stroke="#3a70dc" stroke-width="1.600"/><circle cx="16.300" cy="7.300" r="1.400" fill="#e04434"/></svg>
<div style="left:1746px;top:97px;width:151px;height:58px;background:#8d8d8d;"></div>
<div style="left:1747px;top:98px;width:148px;height:55px;background:#fdfdfd;"></div>
<div style="left:1747px;top:98px;width:147px;height:54px;background:#9a9a9a;"></div>
<div style="left:1747px;top:98px;width:146px;height:53px;background:#ebebeb;"></div>
<div style="left:1747px;top:98px;width:146px;height:18px;background:#8d8d8d;"></div>
<div style="left:1747px;top:98px;width:146px;height:17px;background:linear-gradient(90deg,#e2eaf6,#edf2f9);border-radius:6px 6px 0 0;"></div>
<div style="left:1747px;top:115px;width:146px;height:1px;background:#a6a6a6;"></div>
<span style="left:1752.20px;top:100.00px;font:bold 11px/15px 'DejaVu Sans',sans-serif;color:#3e3e3e;white-space:pre;letter-spacing:0.365px;">Parameters</span>
<div style="left:1754px;top:117.5px;width:137px;height:14.5px;background:#efefef;"></div>
<div style="left:1754px;top:134px;width:129px;height:14px;background:#efefef;"></div>
<div style="left:1755px;top:119px;width:12px;height:12px;background:#fff;border:solid;border-width:1px;border-color:#8a8a8a #f4f4f4 #f4f4f4 #8a8a8a;box-sizing:border-box;"></div>
<div style="left:1756px;top:120px;width:10px;height:10px;border:solid;border-width:1px;border-color:#5c5c5c #e0e0e0 #e0e0e0 #5c5c5c;box-sizing:border-box;"></div>
<span style="left:1773.00px;top:117.50px;font:12px/17px 'DejaVu Sans',sans-serif;color:#000;white-space:pre;letter-spacing:0.286px;">Reference</span>
<div style="left:1850px;top:117px;width:38px;height:15px;background:#eeeeee;"></div>
<div style="left:1755px;top:136px;width:12px;height:12px;background:#f4f4f4;border:solid;border-width:1px;border-color:#b4b4b4 #f6f6f6 #f6f6f6 #b4b4b4;box-sizing:border-box;"></div>
<div style="left:1756px;top:137px;width:10px;height:10px;border:solid;border-width:1px;border-color:#c8c8c8 #ececec #ececec #c8c8c8;box-sizing:border-box;"></div>
<span style="left:1773.00px;top:134.50px;font:12px/17px 'DejaVu Sans',sans-serif;color:#a2a2a2;white-space:pre;letter-spacing:0.180px;">XYZ Adjustment</span>
<div style="left:5px;top:162px;width:1804px;height:216px;background:#8d8d8d;"></div>
<div style="left:6px;top:163px;width:1802px;height:214px;background:#10d010;"></div>
<div style="left:7px;top:164px;width:1800px;height:212px;background:#fbfbfb;"></div>
<div style="left:8px;top:164px;width:1798px;height:211px;background:#ebebeb;"></div>
<div style="left:6px;top:163px;width:1802px;height:16px;background:#8d8d8d;"></div>
<svg style="left:1796px;top:162px" width="13" height="18" viewBox="0 0 13 18"><path d="M0 1.500h6a5.500 5.500 0 0 1 5.500 5.500v11" fill="none" stroke="#10d010" stroke-width="1.200"/></svg>
<div style="left:9px;top:163px;width:2px;height:1px;background:#10d010;"></div>
<div style="left:7px;top:164px;width:1800px;height:14px;background:linear-gradient(90deg,#e2eaf6,#eef3fa);border-radius:6px 6px 0 0;"></div>
<div style="left:6px;top:177px;width:1px;height:2px;background:#10d010;"></div>
<div style="left:1807px;top:168px;width:1px;height:10px;background:#10d010;"></div>
<span style="left:14.50px;top:165.00px;font:bold 10px/14px 'DejaVu Sans',sans-serif;color:#3e3e3e;white-space:pre;letter-spacing:-0.629px;">( Average dE: 1.07 [0.65,0.79,0.17] max: 2.48 [CIE2000] )</span>
<div style="left:8px;top:176.5px;width:1781px;height:197.5px;background:#fff;border:solid #8c8c8c;border-width:2px 0 0 2px;box-sizing:border-box;"></div>
<div style="left:11px;top:179px;width:53px;height:22px;background:#f0f0f0;border:solid;border-width:1px 1px 1px 1px;border-color:#fff #696969 #696969 #fff;box-sizing:border-box;"></div>
<span style="left:21.80px;top:182.00px;font:bold 12px/17px 'Liberation Sans',sans-serif;color:#000;white-space:pre;letter-spacing:-0.457px;">% Sat</span>
<div style="left:64px;top:179px;width:341.5px;height:22px;background:#f0f0f0;"></div>
<div style="left:64px;top:200px;width:341.5px;height:1px;background:#6a6a6a;"></div>
<div style="left:404.5px;top:179px;width:1px;height:22px;background:#8a8a8a;"></div>
<div style="left:64px;top:179px;width:340.5px;height:1px;background:#fff;"></div>
<span style="left:231.41px;top:182.00px;font:bold 12px/17px 'Liberation Sans',sans-serif;color:#000;white-space:pre;">0</span>
<div style="left:405.5px;top:179px;width:341.5px;height:22px;background:#f0c0c0;"></div>
<div style="left:405.5px;top:200px;width:341.5px;height:1px;background:#6a6a6a;"></div>
<div style="left:746px;top:179px;width:1px;height:22px;background:#8a8a8a;"></div>
<span style="left:569.91px;top:182.00px;font:bold 12px/17px 'Liberation Sans',sans-serif;color:#000;white-space:pre;letter-spacing:-0.334px;">25</span>
<div style="left:747px;top:179px;width:341.5px;height:22px;background:#f09090;"></div>
<div style="left:747px;top:200px;width:341.5px;height:1px;background:#6a6a6a;"></div>
<div style="left:1087.5px;top:179px;width:1px;height:22px;background:#8a8a8a;"></div>
<span style="left:911.41px;top:182.00px;font:bold 12px/17px 'Liberation Sans',sans-serif;color:#000;white-space:pre;letter-spacing:-0.334px;">50</span>
<div style="left:1088.5px;top:179px;width:341.5px;height:22px;background:#f06060;"></div>
<div style="left:1088.5px;top:200px;width:341.5px;height:1px;background:#6a6a6a;"></div>
<div style="left:1429px;top:179px;width:1px;height:22px;background:#8a8a8a;"></div>
<span style="left:1252.91px;top:182.00px;font:bold 12px/17px 'Liberation Sans',sans-serif;color:#000;white-space:pre;letter-spacing:-0.334px;">75</span>
<div style="left:1430px;top:179px;width:341px;height:22px;background:#f03030;"></div>
<div style="left:1430px;top:200px;width:341px;height:1px;background:#6a6a6a;"></div>
<div style="left:1770px;top:179px;width:1px;height:22px;background:#b0b0b0;"></div>
<span style="left:1590.99px;top:182.00px;font:bold 12px/17px 'Liberation Sans',sans-serif;color:#000;white-space:pre;letter-spacing:-0.334px;">100</span>
<div style="left:11px;top:201px;width:53px;height:25px;background:#f0f0f0;border:solid;border-width:1px 1px 1px 1px;border-color:#fff #696969 #696969 #fff;box-sizing:border-box;"></div>
<span style="left:33.66px;top:205.00px;font:bold 12px/17px 'Liberation Sans',sans-serif;color:#000;white-space:pre;">x</span>
<div style="left:64px;top:201px;width:341.5px;height:25px;background:#fff;"></div>
<div style="left:64px;top:225px;width:341.5px;height:1px;background:#c8c8c8;"></div>
<div style="left:404.5px;top:201px;width:1px;height:25px;background:#c8c8c8;"></div>
<span style="left:370.28px;top:206.00px;font:12px/17px 'Liberation Sans',sans-serif;color:#000;white-space:pre;letter-spacing:-0.581px;">0.3122</span>
<div style="left:405.5px;top:201px;width:341.5px;height:25px;background:#fff;"></div>
<div style="left:405.5px;top:225px;width:341.5px;height:1px;background:#c8c8c8;"></div>
<div style="left:746px;top:201px;width:1px;height:25px;background:#c8c8c8;"></div>
<span style="left:711.78px;top:206.00px;font:12px/17px 'Liberation Sans',sans-serif;color:#000;white-space:pre;letter-spacing:-0.581px;">0.4196</span>
<div style="left:747px;top:201px;width:341.5px;height:25px;background:#fff;"></div>
<div style="left:747px;top:225px;width:341.5px;height:1px;background:#c8c8c8;"></div>
<div style="left:1087.5px;top:201px;width:1px;height:25px;background:#c8c8c8;"></div>
<span style="left:1053.28px;top:206.00px;font:12px/17px 'Liberation Sans',sans-serif;color:#000;white-space:pre;letter-spacing:-0.581px;">0.5055</span>
<div style="left:1088.5px;top:201px;width:341.5px;height:25px;background:#fff;"></div>
<div style="left:1088.5px;top:225px;width:341.5px;height:1px;background:#c8c8c8;"></div>
<div style="left:1429px;top:201px;width:1px;height:25px;background:#c8c8c8;"></div>
<span style="left:1394.78px;top:206.00px;font:12px/17px 'Liberation Sans',sans-serif;color:#000;white-space:pre;letter-spacing:-0.581px;">0.5734</span>
<div style="left:1430px;top:201px;width:341px;height:25px;background:#fff;"></div>
<div style="left:1430px;top:225px;width:341px;height:1px;background:#c8c8c8;"></div>
<div style="left:1770px;top:201px;width:1px;height:25px;background:#c8c8c8;"></div>
<span style="left:1735.78px;top:206.00px;font:12px/17px 'Liberation Sans',sans-serif;color:#000;white-space:pre;letter-spacing:-0.581px;">0.6453</span>
<div style="left:11px;top:226px;width:53px;height:25px;background:#f0f0f0;border:solid;border-width:1px 1px 1px 1px;border-color:#fff #696969 #696969 #fff;box-sizing:border-box;"></div>
<span style="left:33.66px;top:230.00px;font:bold 12px/17px 'Liberation Sans',sans-serif;color:#000;white-space:pre;">y</span>
<div style="left:64px;top:226px;width:341.5px;height:25px;background:#fff;"></div>
<div style="left:64px;top:250px;width:341.5px;height:1px;background:#c8c8c8;"></div>
<div style="left:404.5px;top:226px;width:1px;height:25px;background:#c8c8c8;"></div>
<span style="left:370.28px;top:231.00px;font:12px/17px 'Liberation Sans',sans-serif;color:#000;white-space:pre;letter-spacing:-0.581px;">0.3283</span>
<div style="left:405.5px;top:226px;width:341.5px;height:25px;background:#fff;"></div>
<div style="left:405.5px;top:250px;width:341.5px;height:1px;background:#c8c8c8;"></div>
<div style="left:746px;top:226px;width:1px;height:25px;background:#c8c8c8;"></div>
<span style="left:711.78px;top:231.00px;font:12px/17px 'Liberation Sans',sans-serif;color:#000;white-space:pre;letter-spacing:-0.581px;">0.3278</span>
<div style="left:747px;top:226px;width:341.5px;height:25px;background:#fff;"></div>
<div style="left:747px;top:250px;width:341.5px;height:1px;background:#c8c8c8;"></div>
<div style="left:1087.5px;top:226px;width:1px;height:25px;background:#c8c8c8;"></div>
<span style="left:1053.28px;top:231.00px;font:12px/17px 'Liberation Sans',sans-serif;color:#000;white-space:pre;letter-spacing:-0.581px;">0.3260</span>
<div style="left:1088.5px;top:226px;width:341.5px;height:25px;background:#fff;"></div>
<div style="left:1088.5px;top:250px;width:341.5px;height:1px;background:#c8c8c8;"></div>
<div style="left:1429px;top:226px;width:1px;height:25px;background:#c8c8c8;"></div>
<span style="left:1394.78px;top:231.00px;font:12px/17px 'Liberation Sans',sans-serif;color:#000;white-space:pre;letter-spacing:-0.581px;">0.3297</span>
<div style="left:1430px;top:226px;width:341px;height:25px;background:#fff;"></div>
<div style="left:1430px;top:250px;width:341px;height:1px;background:#c8c8c8;"></div>
<div style="left:1770px;top:226px;width:1px;height:25px;background:#c8c8c8;"></div>
<span style="left:1735.78px;top:231.00px;font:12px/17px 'Liberation Sans',sans-serif;color:#000;white-space:pre;letter-spacing:-0.581px;">0.3288</span>
<div style="left:11px;top:251px;width:53px;height:25px;background:#f0f0f0;border:solid;border-width:1px 1px 1px 1px;border-color:#fff #696969 #696969 #fff;box-sizing:border-box;"></div>
<span style="left:33.00px;top:255.00px;font:bold 12px/17px 'Liberation Sans',sans-serif;color:#000;white-space:pre;">Y</span>
<div style="left:64px;top:251px;width:341.5px;height:25px;background:#fff;"></div>
<div style="left:64px;top:275px;width:341.5px;height:1px;background:#c8c8c8;"></div>
<div style="left:404.5px;top:251px;width:1px;height:25px;background:#c8c8c8;"></div>
<span style="left:370.28px;top:256.00px;font:12px/17px 'Liberation Sans',sans-serif;color:#000;white-space:pre;letter-spacing:-0.581px;">22.533</span>
<div style="left:405.5px;top:251px;width:341.5px;height:25px;background:#fff;"></div>
<div style="left:405.5px;top:275px;width:341.5px;height:1px;background:#c8c8c8;"></div>
<div style="left:746px;top:251px;width:1px;height:25px;background:#c8c8c8;"></div>
<span style="left:711.78px;top:256.00px;font:12px/17px 'Liberation Sans',sans-serif;color:#000;white-space:pre;letter-spacing:-0.581px;">21.469</span>
<div style="left:747px;top:251px;width:341.5px;height:25px;background:#fff;"></div>
<div style="left:747px;top:275px;width:341.5px;height:1px;background:#c8c8c8;"></div>
<div style="left:1087.5px;top:251px;width:1px;height:25px;background:#c8c8c8;"></div>
<span style="left:1053.28px;top:256.00px;font:12px/17px 'Liberation Sans',sans-serif;color:#000;white-space:pre;letter-spacing:-0.581px;">22.448</span>
<div style="left:1088.5px;top:251px;width:341.5px;height:25px;background:#fff;"></div>
<div style="left:1088.5px;top:275px;width:341.5px;height:1px;background:#c8c8c8;"></div>
<div style="left:1429px;top:251px;width:1px;height:25px;background:#c8c8c8;"></div>
<span style="left:1394.78px;top:256.00px;font:12px/17px 'Liberation Sans',sans-serif;color:#000;white-space:pre;letter-spacing:-0.581px;">24.286</span>
<div style="left:1430px;top:251px;width:341px;height:25px;background:#fff;"></div>
<div style="left:1430px;top:275px;width:341px;height:1px;background:#c8c8c8;"></div>
<div style="left:1770px;top:251px;width:1px;height:25px;background:#c8c8c8;"></div>
<span style="left:1735.78px;top:256.00px;font:12px/17px 'Liberation Sans',sans-serif;color:#000;white-space:pre;letter-spacing:-0.581px;">25.045</span>
<div style="left:11px;top:276px;width:53px;height:25px;background:#f0f0f0;border:solid;border-width:1px 1px 1px 1px;border-color:#fff #696969 #696969 #fff;box-sizing:border-box;"></div>
<span style="left:18.08px;top:280.00px;font:bold 12px/17px 'Liberation Sans',sans-serif;color:#000;white-space:pre;letter-spacing:-0.407px;">Delta E</span>
<div style="left:64px;top:276px;width:341.5px;height:25px;background:#afffaf;"></div>
<div style="left:64px;top:300px;width:341.5px;height:1px;background:#c8c8c8;"></div>
<div style="left:404.5px;top:276px;width:1px;height:25px;background:#c8c8c8;"></div>
<span style="left:387.24px;top:281.00px;font:bold 12px/17px 'Liberation Sans',sans-serif;color:#000;white-space:pre;letter-spacing:-0.139px;">0.2</span>
<div style="left:405.5px;top:276px;width:341.5px;height:25px;background:#ffffaa;"></div>
<div style="left:405.5px;top:300px;width:341.5px;height:1px;background:#c8c8c8;"></div>
<div style="left:746px;top:276px;width:1px;height:25px;background:#c8c8c8;"></div>
<span style="left:728.74px;top:281.00px;font:bold 12px/17px 'Liberation Sans',sans-serif;color:#000;white-space:pre;letter-spacing:-0.139px;">2.5</span>
<div style="left:747px;top:276px;width:341.5px;height:25px;background:#afffaf;"></div>
<div style="left:747px;top:300px;width:341.5px;height:1px;background:#c8c8c8;"></div>
<div style="left:1087.5px;top:276px;width:1px;height:25px;background:#c8c8c8;"></div>
<span style="left:1070.24px;top:281.00px;font:bold 12px/17px 'Liberation Sans',sans-serif;color:#000;white-space:pre;letter-spacing:-0.139px;">1.6</span>
<div style="left:1088.5px;top:276px;width:341.5px;height:25px;background:#afffaf;"></div>
<div style="left:1088.5px;top:300px;width:341.5px;height:1px;background:#c8c8c8;"></div>
<div style="left:1429px;top:276px;width:1px;height:25px;background:#c8c8c8;"></div>
<span style="left:1411.74px;top:281.00px;font:bold 12px/17px 'Liberation Sans',sans-serif;color:#000;white-space:pre;letter-spacing:-0.139px;">0.3</span>
<div style="left:1430px;top:276px;width:341px;height:25px;background:#afffaf;"></div>
<div style="left:1430px;top:300px;width:341px;height:1px;background:#c8c8c8;"></div>
<div style="left:1770px;top:276px;width:1px;height:25px;background:#c8c8c8;"></div>
<span style="left:1752.74px;top:281.00px;font:bold 12px/17px 'Liberation Sans',sans-serif;color:#000;white-space:pre;letter-spacing:-0.139px;">0.8</span>
<div style="left:11px;top:301px;width:53px;height:25px;background:#f0f0f0;border:solid;border-width:1px 1px 1px 1px;border-color:#fff #696969 #696969 #fff;box-sizing:border-box;"></div>
<span style="left:16.22px;top:305.00px;font:bold 12px/17px 'Liberation Sans',sans-serif;color:#000;white-space:pre;letter-spacing:-0.391px;">delta xy</span>
<div style="left:64px;top:301px;width:341.5px;height:25px;background:#f0f0f0;"></div>
<div style="left:64px;top:325px;width:341.5px;height:1px;background:#c8c8c8;"></div>
<div style="left:404.5px;top:301px;width:1px;height:25px;background:#c8c8c8;"></div>
<span style="left:370.28px;top:306.00px;font:12px/17px 'Liberation Sans',sans-serif;color:#000;white-space:pre;letter-spacing:-0.581px;">0.0009</span>
<div style="left:405.5px;top:301px;width:341.5px;height:25px;background:#f0f0f0;"></div>
<div style="left:405.5px;top:325px;width:341.5px;height:1px;background:#c8c8c8;"></div>
<div style="left:746px;top:301px;width:1px;height:25px;background:#c8c8c8;"></div>
<span style="left:711.78px;top:306.00px;font:12px/17px 'Liberation Sans',sans-serif;color:#000;white-space:pre;letter-spacing:-0.581px;">0.0173</span>
<div style="left:747px;top:301px;width:341.5px;height:25px;background:#f0f0f0;"></div>
<div style="left:747px;top:325px;width:341.5px;height:1px;background:#c8c8c8;"></div>
<div style="left:1087.5px;top:301px;width:1px;height:25px;background:#c8c8c8;"></div>
<span style="left:1053.28px;top:306.00px;font:12px/17px 'Liberation Sans',sans-serif;color:#000;white-space:pre;letter-spacing:-0.581px;">0.0163</span>
<div style="left:1088.5px;top:301px;width:341.5px;height:25px;background:#f0f0f0;"></div>
<div style="left:1088.5px;top:325px;width:341.5px;height:1px;background:#c8c8c8;"></div>
<div style="left:1429px;top:301px;width:1px;height:25px;background:#c8c8c8;"></div>
<span style="left:1394.78px;top:306.00px;font:12px/17px 'Liberation Sans',sans-serif;color:#000;white-space:pre;letter-spacing:-0.581px;">0.0013</span>
<div style="left:1430px;top:301px;width:341px;height:25px;background:#f0f0f0;"></div>
<div style="left:1430px;top:325px;width:341px;height:1px;background:#c8c8c8;"></div>
<div style="left:1770px;top:301px;width:1px;height:25px;background:#c8c8c8;"></div>
<span style="left:1735.78px;top:306.00px;font:12px/17px 'Liberation Sans',sans-serif;color:#000;white-space:pre;letter-spacing:-0.581px;">0.0054</span>
<div style="left:11px;top:326px;width:53px;height:25px;background:#f0f0f0;border:solid;border-width:1px 1px 1px 1px;border-color:#fff #696969 #696969 #fff;box-sizing:border-box;"></div>
<span style="left:19.02px;top:330.00px;font:bold 12px/17px 'Liberation Sans',sans-serif;color:#000;white-space:pre;letter-spacing:-0.387px;">delta L</span>
<div style="left:64px;top:326px;width:341.5px;height:25px;background:#e0e0e0;"></div>
<div style="left:64px;top:350px;width:341.5px;height:1px;background:#c8c8c8;"></div>
<div style="left:404.5px;top:326px;width:1px;height:25px;background:#c8c8c8;"></div>
<span style="left:372.11px;top:331.00px;font:12px/17px 'Liberation Sans',sans-serif;color:#000;white-space:pre;letter-spacing:-0.549px;">-0.3 %</span>
<div style="left:405.5px;top:326px;width:341.5px;height:25px;background:#e0e0e0;"></div>
<div style="left:405.5px;top:350px;width:341.5px;height:1px;background:#c8c8c8;"></div>
<div style="left:746px;top:326px;width:1px;height:25px;background:#c8c8c8;"></div>
<span style="left:713.61px;top:331.00px;font:12px/17px 'Liberation Sans',sans-serif;color:#000;white-space:pre;letter-spacing:-0.549px;">-6.5 %</span>
<div style="left:747px;top:326px;width:341.5px;height:25px;background:#e0e0e0;"></div>
<div style="left:747px;top:350px;width:341.5px;height:1px;background:#c8c8c8;"></div>
<div style="left:1087.5px;top:326px;width:1px;height:25px;background:#c8c8c8;"></div>
<span style="left:1055.11px;top:331.00px;font:12px/17px 'Liberation Sans',sans-serif;color:#000;white-space:pre;letter-spacing:-0.549px;">-4.2 %</span>
<div style="left:1088.5px;top:326px;width:341.5px;height:25px;background:#e0e0e0;"></div>
<div style="left:1088.5px;top:350px;width:341.5px;height:1px;background:#c8c8c8;"></div>
<div style="left:1429px;top:326px;width:1px;height:25px;background:#c8c8c8;"></div>
<span style="left:1393.89px;top:331.00px;font:12px/17px 'Liberation Sans',sans-serif;color:#000;white-space:pre;letter-spacing:-0.597px;">+1.0 %</span>
<div style="left:1430px;top:326px;width:341px;height:25px;background:#e0e0e0;"></div>
<div style="left:1430px;top:350px;width:341px;height:1px;background:#c8c8c8;"></div>
<div style="left:1770px;top:326px;width:1px;height:25px;background:#c8c8c8;"></div>
<span style="left:1737.61px;top:331.00px;font:12px/17px 'Liberation Sans',sans-serif;color:#000;white-space:pre;letter-spacing:-0.549px;">-2.4 %</span>
<div style="left:11px;top:351px;width:53px;height:4px;background:#f0f0f0;border:solid;border-width:1px 1px 0px 1px;border-color:#fff #696969 #696969 #fff;box-sizing:border-box;"></div>
<div style="left:64px;top:351px;width:341.5px;height:4px;background:#f0f0f0;"></div>
<div style="left:404.5px;top:351px;width:1px;height:4px;background:#c8c8c8;"></div>
<div style="left:405.5px;top:351px;width:341.5px;height:4px;background:#f0f0f0;"></div>
<div style="left:746px;top:351px;width:1px;height:4px;background:#c8c8c8;"></div>
<div style="left:747px;top:351px;width:341.5px;height:4px;background:#f0f0f0;"></div>
<div style="left:1087.5px;top:351px;width:1px;height:4px;background:#c8c8c8;"></div>
<div style="left:1088.5px;top:351px;width:341.5px;height:4px;background:#f0f0f0;"></div>
<div style="left:1429px;top:351px;width:1px;height:4px;background:#c8c8c8;"></div>
<div style="left:1430px;top:351px;width:341px;height:4px;background:#f0f0f0;"></div>
<div style="left:1770px;top:351px;width:1px;height:4px;background:#c8c8c8;"></div>
<div style="left:1771px;top:179px;width:18px;height:175px;background:#efefef;"></div>
<div style="left:1779px;top:195px;width:2px;height:141px;background:#7d7d7d;"></div>
<div style="left:11px;top:355px;width:1778px;height:18px;background:#f0f0f0;"></div>
<svg style="left:15px;top:359px" width="6" height="10" viewBox="0 0 6 10"><path d="M6 0v10l-6-5z" fill="#a8a8a8"/></svg>
<svg style="left:1760px;top:359px" width="6" height="10" viewBox="0 0 6 10"><path d="M0 0v10l6-5z" fill="#a8a8a8"/></svg>
<div style="left:1789px;top:180px;width:18px;height:193px;background:#f0f0f0;"></div>
<div style="left:1789px;top:179px;width:18px;height:1px;background:#10d010;"></div>
<div style="left:1771px;top:178px;width:18px;height:1px;background:#9a9a9a;"></div>
<div style="left:1809px;top:159px;width:2.5px;height:222px;background:#8c8c8c;"></div>
<div style="left:1811.5px;top:159px;width:86px;height:104px;background:#f6f6f6;"></div>
<div style="left:1811.5px;top:262px;width:86px;height:119px;background:#8c8c8c;"></div>
<div style="left:1815px;top:162px;width:82px;height:99px;background:#8d8d8d;"></div>
<div style="left:1816px;top:163px;width:79px;height:96px;background:#fdfdfd;"></div>
<div style="left:1816px;top:163px;width:78px;height:95px;background:#9a9a9a;"></div>
<div style="left:1816px;top:163px;width:77px;height:94px;background:#ebebeb;"></div>
<div style="left:1816px;top:163px;width:77px;height:18px;background:#8d8d8d;"></div>
<div style="left:1816px;top:163px;width:77px;height:17px;background:linear-gradient(90deg,#e2eaf6,#edf2f9);border-radius:6px 6px 0 0;"></div>
<div style="left:1816px;top:180px;width:77px;height:1px;background:#a6a6a6;"></div>
<span style="left:1822.00px;top:165.00px;font:bold 11px/15px 'DejaVu Sans',sans-serif;color:#3e3e3e;white-space:pre;letter-spacing:0.307px;">Display</span>
<div style="left:1820px;top:181px;width:68px;height:14px;background:#eeeeee;"></div>
<svg style="left:1823px;top:181px" width="12" height="12" viewBox="0 0 12 12"><circle cx="6" cy="6" r="5.400" fill="#f2f2f2" stroke="none"/><path d="M2.200 9.800a5.400 5.400 0 0 1 7.600-7.600" fill="none" stroke="#9c9c9c" stroke-width="1.400"/><path d="M9.800 2.200a5.400 5.400 0 0 1-7.600 7.600" fill="none" stroke="#dcdcdc" stroke-width="1"/></svg>
<span style="left:1841.50px;top:181.00px;font:12px/17px 'DejaVu Sans',sans-serif;color:#a8a8a8;white-space:pre;letter-spacing:0.394px;">Sensor</span>
<div style="left:1820px;top:197px;width:68px;height:14px;background:#eeeeee;"></div>
<svg style="left:1823px;top:197px" width="12" height="12" viewBox="0 0 12 12"><circle cx="6" cy="6" r="5.400" fill="#fff" stroke="none"/><path d="M2.200 9.800a5.400 5.400 0 0 1 7.600-7.600" fill="none" stroke="#505050" stroke-width="1.400"/><path d="M9.800 2.200a5.400 5.400 0 0 1-7.600 7.600" fill="none" stroke="#dcdcdc" stroke-width="1"/></svg>
<span style="left:1841.50px;top:197.00px;font:12px/17px 'DejaVu Sans',sans-serif;color:#000;white-space:pre;">RGB</span>
<div style="left:1820px;top:213px;width:68px;height:14px;background:#eeeeee;"></div>
<svg style="left:1823px;top:213px" width="12" height="12" viewBox="0 0 12 12"><circle cx="6" cy="6" r="5.400" fill="#fff" stroke="none"/><path d="M2.200 9.800a5.400 5.400 0 0 1 7.600-7.600" fill="none" stroke="#505050" stroke-width="1.400"/><path d="M9.800 2.200a5.400 5.400 0 0 1-7.600 7.600" fill="none" stroke="#dcdcdc" stroke-width="1"/></svg>
<span style="left:1841.50px;top:213.00px;font:12px/17px 'DejaVu Sans',sans-serif;color:#000;white-space:pre;">XYZ</span>
<div style="left:1820px;top:229px;width:68px;height:14px;background:#eeeeee;"></div>
<svg style="left:1823px;top:229px" width="12" height="12" viewBox="0 0 12 12"><circle cx="6" cy="6" r="5.400" fill="#fff" stroke="none"/><path d="M2.200 9.800a5.400 5.400 0 0 1 7.600-7.600" fill="none" stroke="#505050" stroke-width="1.400"/><path d="M9.800 2.200a5.400 5.400 0 0 1-7.600 7.600" fill="none" stroke="#dcdcdc" stroke-width="1"/></svg>
<span style="left:1841.50px;top:229.00px;font:12px/17px 'DejaVu Sans',sans-serif;color:#000;white-space:pre;">xyz</span>
<div style="left:1820px;top:244px;width:68px;height:14px;background:#eeeeee;"></div>
<svg style="left:1823px;top:244px" width="12" height="12" viewBox="0 0 12 12"><circle cx="6" cy="6" r="5.400" fill="#fff" stroke="none"/><path d="M2.200 9.800a5.400 5.400 0 0 1 7.600-7.600" fill="none" stroke="#505050" stroke-width="1.400"/><path d="M9.800 2.200a5.400 5.400 0 0 1-7.600 7.600" fill="none" stroke="#dcdcdc" stroke-width="1"/><circle cx="6" cy="6" r="2" fill="#000"/></svg>
<span style="left:1841.50px;top:244.00px;font:12px/17px 'DejaVu Sans',sans-serif;color:#000;white-space:pre;">xyY</span>
<div style="left:1812.5px;top:264.5px;width:82.5px;height:29.0px;background:#ebebeb;border:1px solid;border-color:#f8f8f8 #c8c8c8 #c8c8c8 #f8f8f8;box-sizing:border-box;"></div>
<div style="left:1812.5px;top:294.5px;width:82.5px;height:29.0px;background:#ebebeb;border:1px solid;border-color:#f8f8f8 #c8c8c8 #c8c8c8 #f8f8f8;box-sizing:border-box;"></div>
<div style="left:1812.5px;top:324.5px;width:82.5px;height:28.5px;background:#ebebeb;border:1px solid;border-color:#f8f8f8 #c8c8c8 #c8c8c8 #f8f8f8;box-sizing:border-box;"></div>
<span style="left:1863.20px;top:273.00px;font:12px/17px 'DejaVu Sans',sans-serif;color:#000;white-space:pre;letter-spacing:-0.420px;">Go</span>
<span style="left:1851.30px;top:302.00px;font:12px/17px 'DejaVu Sans',sans-serif;color:#000;white-space:pre;letter-spacing:0.095px;">Delete</span>
<span style="left:1858.60px;top:332.00px;font:12px/17px 'DejaVu Sans',sans-serif;color:#000;white-space:pre;letter-spacing:0.035px;">Refs</span>
<svg style="left:1818px;top:267px" width="32" height="26" viewBox="0 0 32 26"><rect x="0" y="3" width="32" height="22" fill="#a8a8a8"/><path d="M.8 3v22M31.200 6v19" stroke="#1c1c1c" stroke-width="1.600" stroke-dasharray="1.600 1.200"/><g fill="#d6d6d6" stroke="#6a6a6a" stroke-width=".5"><path d="M2.500 5h4.500v2.500h2.500v4h-2.500v2.500h-4.500zM2.500 15.500h4.500v2.500h2.500v3.500h-2.500v2.500h-4.500z"/><path d="M30 8h-4v2.500h-2.500v3.500h2.500v2h4zM30 18h-4v2h-2v3h2v2h4z"/></g><path d="M5.500 0h15c-1.500 5 0 10 3.500 13l6 5.500-6.500 7.500h-11c1-4-1-7-3-10-2.500-4-4-10-4-16z" fill="#e80c1c"/><path d="M5.500 0c0 6 1.500 12 4 16 2 3 4 6 3 10M20.500 0c-1.500 5 0 10 3.500 13l6 5.500" fill="none" stroke="#4a0006" stroke-width="1.400" stroke-dasharray="1.400 1"/><path d="M7.500 6.500l13-3.500M10 14l12-5.500M13 21l13-6M12.500 26l6-9" fill="none" stroke="#7c0410" stroke-width=".9"/><path d="M9 4l9-2.500M11.500 11.500l8.500-4M15 19l9-4.500" fill="none" stroke="#ff6a70" stroke-width=".8"/></svg>
<svg style="left:1819px;top:296px" width="29" height="27" viewBox="0 0 29 27"><defs><linearGradient id="bin" x1="0" y1="0" x2="1" y2="1"><stop offset="0" stop-color="#f2faff"/><stop offset=".5" stop-color="#a8d4f4"/><stop offset="1" stop-color="#5aa4e0"/></linearGradient></defs><path d="M.5 5.500c8-3 19-5 27.500-5l-3 21c-5 4-14 5.500-19 3.500z" fill="url(#bin)" stroke="#b6d8f0" stroke-width=".7"/><path d="M1 6c8-2.500 18-4.500 26.500-4.500-6 3-18 5-26.500 4.500z" fill="#d8ecfb" stroke="#8cc0e8" stroke-width=".5"/><ellipse cx="13" cy="22" rx="8" ry="2.800" fill="#c4e2f8" opacity=".8"/><path d="M13.500 14.500a5 5.500 0 0 1 8-4l1.800-1.800v5.800h-5.800l2-2a2.800 3 0 0 0-4 2zM23.500 16a5 5.500 0 0 1-8 4l-1.800 1.800v-5.800h5.800l-2 2a2.800 3 0 0 0 4-2z" fill="#14a436" stroke="#0c7c24" stroke-width=".4"/></svg>
<svg style="left:1817.8px;top:328px" width="33" height="23" viewBox="0 0 33 23"><path d="M0 23v-10l1.800-1.500v11.500z" fill="#00007c"/><path d="M1.800 23v-11.500l2.200-2.500v14z" fill="#f000f0"/><path d="M4 23v-14l1.500-3 1.300-3 1.300 3v17z" fill="#0808f0"/><path d="M8 23v-17l1.500 1.500 1.800 2.500v13z" fill="#00e8f0"/><path d="M11.300 23v-13l2 1.500 2-2.500v14z" fill="#10e010"/><path d="M15.300 23v-14l1.200-4 1.500-3.500 1.500 0 1.500 2.500 .5 1v18z" fill="#f8f800"/><path d="M21.500 23v-18l1.500 1 1.300 2.500 1 2.500v12z" fill="#8c0404"/><path d="M25.300 23v-12l2-1 1.200-1.500 1.500 0 .8 2 1.700.5v12z" fill="#f80808"/><path d="M0 13l1.800-1.500 2.200-2.500 1.500-3 1.300-3 1.300 3 1.400 1.500 1.800 2.500 2 1.500 2-2.500 1.200-4 1.500-3.500h1.500l1.500 2.500 1 2 1.500 1 1.300 2.500 1 2.500 2-1 1.200-1.500h1.500l.8 2 1.700.5" fill="none" stroke="#f4f400" stroke-width="1"/></svg>
<div style="left:1818px;top:358px;width:56px;height:18px;background:#f0f0f0;"></div>
<div style="left:1819px;top:360px;width:12px;height:12px;background:#fff;border:solid;border-width:1px;border-color:#8a8a8a #f4f4f4 #f4f4f4 #8a8a8a;box-sizing:border-box;"></div>
<div style="left:1820px;top:361px;width:10px;height:10px;border:solid;border-width:1px;border-color:#5c5c5c #e0e0e0 #e0e0e0 #5c5c5c;box-sizing:border-box;"></div>
<span style="left:1837.00px;top:358.50px;font:12px/17px 'DejaVu Sans',sans-serif;color:#000;white-space:pre;letter-spacing:0.265px;">Edit</span>
<div style="left:5px;top:387px;width:379.5px;height:632px;background:#8d8d8d;"></div>
<div style="left:6px;top:1017px;width:378.5px;height:2px;background:#6e6e6e;"></div>
<div style="left:382.5px;top:388px;width:2px;height:631px;background:#6e6e6e;"></div>
<div style="left:6px;top:388px;width:376.5px;height:629px;background:#fdfdfd;"></div>
<div style="left:6px;top:388px;width:375.5px;height:627px;background:#9a9a9a;"></div>
<div style="left:6px;top:388px;width:374.5px;height:626px;background:#ebebeb;"></div>
<div style="left:6px;top:388px;width:374.5px;height:18px;background:#8d8d8d;"></div>
<div style="left:6px;top:388px;width:374.5px;height:17px;background:linear-gradient(90deg,#e2eaf6,#edf2f9);border-radius:6px 6px 0 0;"></div>
<div style="left:6px;top:405px;width:374.5px;height:1px;background:#a6a6a6;"></div>
<span style="left:12.00px;top:390.00px;font:bold 11px/15px 'DejaVu Sans',sans-serif;color:#3e3e3e;white-space:pre;letter-spacing:0.258px;">Selected color</span>
<div style="left:384.7px;top:384px;width:2.8px;height:636px;background:#737373;"></div>
<div style="left:18px;top:409px;width:110px;height:15px;background:#f0f0f0;"></div>
<span style="left:18.00px;top:409.00px;font:12px/17px 'DejaVu Sans',sans-serif;color:#000;white-space:pre;letter-spacing:0.089px;">RGB Levels</span>
<div style="left:230px;top:407px;width:128px;height:15px;background:#f0f0f0;"></div>
<span style="left:241.00px;top:407.00px;font:12px/17px 'DejaVu Sans',sans-serif;color:#000;white-space:pre;letter-spacing:0.407px;">Current Measure</span>
<div style="left:14px;top:433px;width:200px;height:86px;background:#eeeeee;"></div>
<svg style="left:14px;top:433px" width="200" height="86" viewBox="0 0 200 86"><path d="M0 44.500h200" stroke="#7c7c7c" stroke-width="1" stroke-dasharray="3 3"/><rect x="0" y="80" width="200" height="5.500" fill="#000"/><path d="M0 81c10-4 18-5 25-5s16 1 25 5z" fill="#b00000" stroke="#000" stroke-width=".8"/><path d="M51 81c10-4 18-5 25-5s16 1 25 5z" fill="#10a010" stroke="#000" stroke-width=".8"/><path d="M102 81c10-4 18-5 25-5s16 1 25 5z" fill="#0000b0" stroke="#000" stroke-width=".8"/><path d="M153 81c10-4 17-5 24-5s15 1 23 5z" fill="#c08a10" stroke="#000" stroke-width=".8"/></svg>
<span style="left:26.00px;top:494.00px;font:12px/17px 'Liberation Serif',serif;color:#000;white-space:pre;-webkit-text-stroke:0.3px #000;">0.0%</span>
<span style="left:77.00px;top:494.00px;font:12px/17px 'Liberation Serif',serif;color:#000;white-space:pre;-webkit-text-stroke:0.3px #000;">0.0%</span>
<span style="left:128.00px;top:494.00px;font:12px/17px 'Liberation Serif',serif;color:#000;white-space:pre;-webkit-text-stroke:0.3px #000;">0.0%</span>
<span style="left:176.33px;top:494.00px;font:12px/17px 'Liberation Serif',serif;color:#000;white-space:pre;-webkit-text-stroke:0.3px #000;">dE 0.0</span>
<div style="left:16px;top:533px;width:192px;height:74px;background:#f0f0f0;"></div>
<span style="left:35.00px;top:533.00px;font:bold 13px/18px 'Liberation Sans',sans-serif;color:#000;white-space:pre;letter-spacing:0.607px;">Measure</span>
<span style="left:127.00px;top:533.00px;font:bold 13px/18px 'Liberation Sans',sans-serif;color:#000;white-space:pre;letter-spacing:0.348px;">Reference</span>
<div style="left:18px;top:622px;width:42px;height:15px;background:#f0f0f0;"></div>
<span style="left:18.30px;top:622.00px;font:12px/17px 'DejaVu Sans',sans-serif;color:#000;white-space:pre;letter-spacing:0.396px;">Target</span>
<div style="left:50px;top:638px;width:116px;height:89px;background:conic-gradient(from 0deg at 50% 50%, #60ff00 0deg, #c8e000 28deg, #ffc000 48deg, #ff6000 70deg, #ff0000 92deg, #ff0050 118deg, #ff0090 135deg, #c000b0 158deg, #9000c8 182deg, #4800f0 208deg, #0000ff 228deg, #0040e0 250deg, #0088b0 272deg, #00b0a0 292deg, #00f080 318deg, #10ff40 340deg, #60ff00 360deg);border:solid #000;border-width:1px 1px 0 1px;box-sizing:border-box;"></div>
<svg style="left:50px;top:638px" width="116" height="89" viewBox="0 0 116 89" fill="none"><rect x="17.500" y="13.500" width="81.500" height="62.500" rx="7.500" fill="#000" stroke="#fff" stroke-width="1.100"/><path d="M15 44.500h87M58.500 13.500v63" stroke="#fff" stroke-width="1" stroke-dasharray="3 2.200"/><ellipse cx="58" cy="43.800" rx="21.200" ry="16" stroke="#fff" stroke-width="1" stroke-dasharray="3 2.600"/></svg>
<div style="left:220px;top:430px;width:153px;height:578.5px;background:#f0f0f0;border:solid;border-color:#8a8a8a #fff #fff #8a8a8a;border-width:2px 1px 1.500px 2px;box-sizing:border-box;"></div>
<div style="left:222px;top:432px;width:59px;height:23px;background:#f0f0f0;border:solid;border-width:1px;border-color:#fff #696969 #696969 #fff;box-sizing:border-box;"></div>
<span style="left:229.94px;top:436.00px;font:bold 12px/17px 'Liberation Sans',sans-serif;color:#000;white-space:pre;">Y cd/m²</span>
<div style="left:281px;top:432px;width:74px;height:23px;background:#fff;border-bottom:1px solid #c8c8c8;border-right:1px solid #c8c8c8;box-sizing:border-box;"></div>
<div style="left:222px;top:455px;width:59px;height:23px;background:#f0f0f0;border:solid;border-width:1px;border-color:#fff #696969 #696969 #fff;box-sizing:border-box;"></div>
<span style="left:238.67px;top:459.00px;font:bold 12px/17px 'Liberation Sans',sans-serif;color:#000;white-space:pre;letter-spacing:-0.159px;">Y ftL</span>
<div style="left:281px;top:455px;width:74px;height:23px;background:#fff;border-bottom:1px solid #c8c8c8;border-right:1px solid #c8c8c8;box-sizing:border-box;"></div>
<div style="left:222px;top:478px;width:59px;height:23px;background:#f0f0f0;border:solid;border-width:1px;border-color:#fff #696969 #696969 #fff;box-sizing:border-box;"></div>
<span style="left:245.62px;top:482.00px;font:bold 12px/17px 'Liberation Sans',sans-serif;color:#000;white-space:pre;letter-spacing:-0.182px;">T°</span>
<div style="left:281px;top:478px;width:74px;height:23px;background:#fff;border-bottom:1px solid #c8c8c8;border-right:1px solid #c8c8c8;box-sizing:border-box;"></div>
<div style="left:222px;top:501px;width:59px;height:23px;background:#f0f0f0;border:solid;border-width:1px;border-color:#fff #696969 #696969 #fff;box-sizing:border-box;"></div>
<span style="left:247.50px;top:505.00px;font:bold 12px/17px 'Liberation Sans',sans-serif;color:#000;white-space:pre;">X</span>
<div style="left:281px;top:501px;width:74px;height:23px;background:#e0e0e0;border-bottom:1px solid #c8c8c8;border-right:1px solid #c8c8c8;box-sizing:border-box;"></div>
<div style="left:222px;top:524px;width:59px;height:23px;background:#f0f0f0;border:solid;border-width:1px;border-color:#fff #696969 #696969 #fff;box-sizing:border-box;"></div>
<span style="left:247.50px;top:528.00px;font:bold 12px/17px 'Liberation Sans',sans-serif;color:#000;white-space:pre;">Y</span>
<div style="left:281px;top:524px;width:74px;height:23px;background:#e0e0e0;border-bottom:1px solid #c8c8c8;border-right:1px solid #c8c8c8;box-sizing:border-box;"></div>
<div style="left:222px;top:547px;width:59px;height:23px;background:#f0f0f0;border:solid;border-width:1px;border-color:#fff #696969 #696969 #fff;box-sizing:border-box;"></div>
<span style="left:247.83px;top:551.00px;font:bold 12px/17px 'Liberation Sans',sans-serif;color:#000;white-space:pre;">Z</span>
<div style="left:281px;top:547px;width:74px;height:23px;background:#e0e0e0;border-bottom:1px solid #c8c8c8;border-right:1px solid #c8c8c8;box-sizing:border-box;"></div>
<div style="left:222px;top:570px;width:59px;height:23px;background:#f0f0f0;border:solid;border-width:1px;border-color:#fff #696969 #696969 #fff;box-sizing:border-box;"></div>
<span style="left:247.17px;top:574.00px;font:bold 12px/17px 'Liberation Sans',sans-serif;color:#000;white-space:pre;">R</span>
<div style="left:281px;top:570px;width:74px;height:23px;background:#fff;border-bottom:1px solid #c8c8c8;border-right:1px solid #c8c8c8;box-sizing:border-box;"></div>
<div style="left:222px;top:593px;width:59px;height:23px;background:#f0f0f0;border:solid;border-width:1px;border-color:#fff #696969 #696969 #fff;box-sizing:border-box;"></div>
<span style="left:246.83px;top:597.00px;font:bold 12px/17px 'Liberation Sans',sans-serif;color:#000;white-space:pre;">G</span>
<div style="left:281px;top:593px;width:74px;height:23px;background:#fff;border-bottom:1px solid #c8c8c8;border-right:1px solid #c8c8c8;box-sizing:border-box;"></div>
<div style="left:222px;top:616px;width:59px;height:23px;background:#f0f0f0;border:solid;border-width:1px;border-color:#fff #696969 #696969 #fff;box-sizing:border-box;"></div>
<span style="left:247.17px;top:620.00px;font:bold 12px/17px 'Liberation Sans',sans-serif;color:#000;white-space:pre;">B</span>
<div style="left:281px;top:616px;width:74px;height:23px;background:#fff;border-bottom:1px solid #c8c8c8;border-right:1px solid #c8c8c8;box-sizing:border-box;"></div>
<div style="left:222px;top:639px;width:59px;height:23px;background:#f0f0f0;border:solid;border-width:1px;border-color:#fff #696969 #696969 #fff;box-sizing:border-box;"></div>
<span style="left:248.16px;top:643.00px;font:bold 12px/17px 'Liberation Sans',sans-serif;color:#000;white-space:pre;">x</span>
<div style="left:281px;top:639px;width:74px;height:23px;background:#e0e0e0;border-bottom:1px solid #c8c8c8;border-right:1px solid #c8c8c8;box-sizing:border-box;"></div>
<div style="left:222px;top:662px;width:59px;height:23px;background:#f0f0f0;border:solid;border-width:1px;border-color:#fff #696969 #696969 #fff;box-sizing:border-box;"></div>
<span style="left:248.16px;top:666.00px;font:bold 12px/17px 'Liberation Sans',sans-serif;color:#000;white-space:pre;">y</span>
<div style="left:281px;top:662px;width:74px;height:23px;background:#e0e0e0;border-bottom:1px solid #c8c8c8;border-right:1px solid #c8c8c8;box-sizing:border-box;"></div>
<div style="left:222px;top:685px;width:59px;height:23px;background:#f0f0f0;border:solid;border-width:1px;border-color:#fff #696969 #696969 #fff;box-sizing:border-box;"></div>
<span style="left:247.50px;top:689.00px;font:bold 12px/17px 'Liberation Sans',sans-serif;color:#000;white-space:pre;">Y</span>
<div style="left:281px;top:685px;width:74px;height:23px;background:#e0e0e0;border-bottom:1px solid #c8c8c8;border-right:1px solid #c8c8c8;box-sizing:border-box;"></div>
<div style="left:222px;top:708px;width:59px;height:23px;background:#f0f0f0;border:solid;border-width:1px;border-color:#fff #696969 #696969 #fff;box-sizing:border-box;"></div>
<span style="left:248.16px;top:712.00px;font:bold 12px/17px 'Liberation Sans',sans-serif;color:#000;white-space:pre;">x</span>
<div style="left:281px;top:708px;width:74px;height:23px;background:#fff;border-bottom:1px solid #c8c8c8;border-right:1px solid #c8c8c8;box-sizing:border-box;"></div>
<div style="left:222px;top:731px;width:59px;height:23px;background:#f0f0f0;border:solid;border-width:1px;border-color:#fff #696969 #696969 #fff;box-sizing:border-box;"></div>
<span style="left:248.16px;top:735.00px;font:bold 12px/17px 'Liberation Sans',sans-serif;color:#000;white-space:pre;">y</span>
<div style="left:281px;top:731px;width:74px;height:23px;background:#fff;border-bottom:1px solid #c8c8c8;border-right:1px solid #c8c8c8;box-sizing:border-box;"></div>
<div style="left:222px;top:754px;width:59px;height:23px;background:#f0f0f0;border:solid;border-width:1px;border-color:#fff #696969 #696969 #fff;box-sizing:border-box;"></div>
<span style="left:248.50px;top:758.00px;font:bold 12px/17px 'Liberation Sans',sans-serif;color:#000;white-space:pre;">z</span>
<div style="left:281px;top:754px;width:74px;height:23px;background:#fff;border-bottom:1px solid #c8c8c8;border-right:1px solid #c8c8c8;box-sizing:border-box;"></div>
<div style="left:222px;top:777px;width:59px;height:23px;background:#f0f0f0;border:solid;border-width:1px;border-color:#fff #696969 #696969 #fff;box-sizing:border-box;"></div>
<span style="left:247.83px;top:781.00px;font:bold 12px/17px 'Liberation Sans',sans-serif;color:#000;white-space:pre;">L</span>
<div style="left:281px;top:777px;width:74px;height:23px;background:#e0e0e0;border-bottom:1px solid #c8c8c8;border-right:1px solid #c8c8c8;box-sizing:border-box;"></div>
<div style="left:222px;top:800px;width:59px;height:23px;background:#f0f0f0;border:solid;border-width:1px;border-color:#fff #696969 #696969 #fff;box-sizing:border-box;"></div>
<span style="left:248.16px;top:804.00px;font:bold 12px/17px 'Liberation Sans',sans-serif;color:#000;white-space:pre;">a</span>
<div style="left:281px;top:800px;width:74px;height:23px;background:#e0e0e0;border-bottom:1px solid #c8c8c8;border-right:1px solid #c8c8c8;box-sizing:border-box;"></div>
<div style="left:222px;top:823px;width:59px;height:23px;background:#f0f0f0;border:solid;border-width:1px;border-color:#fff #696969 #696969 #fff;box-sizing:border-box;"></div>
<span style="left:247.83px;top:827.00px;font:bold 12px/17px 'Liberation Sans',sans-serif;color:#000;white-space:pre;">b</span>
<div style="left:281px;top:823px;width:74px;height:23px;background:#e0e0e0;border-bottom:1px solid #c8c8c8;border-right:1px solid #c8c8c8;box-sizing:border-box;"></div>
<div style="left:222px;top:846px;width:59px;height:23px;background:#f0f0f0;border:solid;border-width:1px;border-color:#fff #696969 #696969 #fff;box-sizing:border-box;"></div>
<span style="left:247.83px;top:850.00px;font:bold 12px/17px 'Liberation Sans',sans-serif;color:#000;white-space:pre;">L</span>
<div style="left:281px;top:846px;width:74px;height:23px;background:#fff;border-bottom:1px solid #c8c8c8;border-right:1px solid #c8c8c8;box-sizing:border-box;"></div>
<div style="left:222px;top:869px;width:59px;height:23px;background:#f0f0f0;border:solid;border-width:1px;border-color:#fff #696969 #696969 #fff;box-sizing:border-box;"></div>
<span style="left:247.17px;top:873.00px;font:bold 12px/17px 'Liberation Sans',sans-serif;color:#000;white-space:pre;">C</span>
<div style="left:281px;top:869px;width:74px;height:23px;background:#fff;border-bottom:1px solid #c8c8c8;border-right:1px solid #c8c8c8;box-sizing:border-box;"></div>
<div style="left:222px;top:892px;width:59px;height:23px;background:#f0f0f0;border:solid;border-width:1px;border-color:#fff #696969 #696969 #fff;box-sizing:border-box;"></div>
<span style="left:247.17px;top:896.00px;font:bold 12px/17px 'Liberation Sans',sans-serif;color:#000;white-space:pre;">H</span>
<div style="left:281px;top:892px;width:74px;height:23px;background:#fff;border-bottom:1px solid #c8c8c8;border-right:1px solid #c8c8c8;box-sizing:border-box;"></div>
<div style="left:222px;top:915px;width:59px;height:23px;background:#f0f0f0;border:solid;border-width:1px;border-color:#fff #696969 #696969 #fff;box-sizing:border-box;"></div>
<span style="left:247.83px;top:919.00px;font:bold 12px/17px 'Liberation Sans',sans-serif;color:#000;white-space:pre;">L</span>
<div style="left:281px;top:915px;width:74px;height:23px;background:#e0e0e0;border-bottom:1px solid #c8c8c8;border-right:1px solid #c8c8c8;box-sizing:border-box;"></div>
<div style="left:222px;top:938px;width:59px;height:23px;background:#f0f0f0;border:solid;border-width:1px;border-color:#fff #696969 #696969 #fff;box-sizing:border-box;"></div>
<span style="left:246.50px;top:942.00px;font:bold 12px/17px 'Liberation Sans',sans-serif;color:#000;white-space:pre;">M</span>
<div style="left:281px;top:938px;width:74px;height:23px;background:#e0e0e0;border-bottom:1px solid #c8c8c8;border-right:1px solid #c8c8c8;box-sizing:border-box;"></div>
<div style="left:222px;top:961px;width:59px;height:23px;background:#f0f0f0;border:solid;border-width:1px;border-color:#fff #696969 #696969 #fff;box-sizing:border-box;"></div>
<span style="left:247.50px;top:965.00px;font:bold 12px/17px 'Liberation Sans',sans-serif;color:#000;white-space:pre;">S</span>
<div style="left:281px;top:961px;width:74px;height:23px;background:#e0e0e0;border-bottom:1px solid #c8c8c8;border-right:1px solid #c8c8c8;box-sizing:border-box;"></div>
<div style="left:222px;top:984px;width:133px;height:23px;background:#a0a0a0;"></div>
<svg style="left:359px;top:437px" width="10" height="7" viewBox="0 0 10 7"><path d="M0 7h10l-5-7z" fill="#ababab"/></svg>
<svg style="left:359px;top:995px" width="10" height="7" viewBox="0 0 10 7"><path d="M0 0h10l-5 7z" fill="#ababab"/></svg>
<div style="left:391px;top:387px;width:1507px;height:632px;background:#8d8d8d;"></div>
<div style="left:392px;top:1017px;width:1506px;height:2px;background:#6e6e6e;"></div>
<div style="left:1896px;top:388px;width:2px;height:631px;background:#6e6e6e;"></div>
<div style="left:392px;top:388px;width:1504px;height:629px;background:#fdfdfd;"></div>
<div style="left:392px;top:388px;width:1503px;height:627px;background:#9a9a9a;"></div>
<div style="left:392px;top:388px;width:1502px;height:626px;background:#ebebeb;"></div>
<div style="left:392px;top:388px;width:1502px;height:18px;background:#8d8d8d;"></div>
<div style="left:392px;top:388px;width:1502px;height:17px;background:linear-gradient(90deg,#e2eaf6,#edf2f9);border-radius:6px 6px 0 0;"></div>
<div style="left:392px;top:405px;width:1502px;height:1px;background:#a6a6a6;"></div>
<span style="left:398.20px;top:390.00px;font:bold 11px/15px 'DejaVu Sans',sans-serif;color:#3e3e3e;white-space:pre;letter-spacing:0.418px;">Information</span>
<div style="left:396px;top:409px;width:303px;height:22px;background:#fff;border:solid;border-width:2px 1px 1px 2px;border-color:#6e6e6e #f6f6f6 #f6f6f6 #6e6e6e;box-sizing:border-box;"></div>
<div style="left:397px;top:410px;width:301px;height:20px;border:solid;border-width:1px 1px 1px 1px;border-color:#a0a0a0 #e0e0e0 #e0e0e0 #a0a0a0;box-sizing:border-box;"></div>
<div style="left:681px;top:412px;width:16px;height:17px;background:#f0f0f0;border:1px solid;border-color:#fff #707070 #707070 #fff;box-sizing:border-box;"></div>
<svg style="left:685px;top:418px" width="8" height="5" viewBox="0 0 8 5"><path d="M0 0h8l-4 4.500z" fill="#000"/></svg>
<span style="left:401.00px;top:413.00px;font:13px/18px 'DejaVu Sans',sans-serif;color:#000;white-space:pre;letter-spacing:-0.512px;">Luminance - Gamma</span>
<div style="left:398px;top:439px;width:748px;height:570px;background:#ffffff;border:solid;border-width:2px 0 0 2px;border-color:#a2a2a2;box-sizing:border-box;"></div>
<div style="left:400px;top:441px;width:742px;height:564px;background:#6e6e6e;"></div>
<svg style="left:402px;top:443px;overflow:hidden" width="740" height="562" viewBox="0 0 740 562"><defs><linearGradient id="cgL" x1="0" y1="0" x2="1" y2="0"><stop offset="0" stop-color="#202020"/><stop offset="1" stop-color="#ffffff"/></linearGradient></defs><rect width="740" height="562" fill="url(#cgL)"/><rect x="0" y="0" width="1" height="562" fill="#004444"/><rect x="74" y="0" width="1" height="562" fill="#004444"/><rect x="148" y="0" width="1" height="562" fill="#004444"/><rect x="222" y="0" width="1" height="562" fill="#004444"/><rect x="296" y="0" width="1" height="562" fill="#004444"/><rect x="370" y="0" width="1" height="562" fill="#004444"/><rect x="444" y="0" width="1" height="562" fill="#004444"/><rect x="518" y="0" width="1" height="562" fill="#004444"/><rect x="592" y="0" width="1" height="562" fill="#004444"/><rect x="666" y="0" width="1" height="562" fill="#004444"/><rect x="0" y="475" width="740" height="1" fill="#004444"/><text x="2.800" y="470.8" font-family="Liberation Serif,serif" font-size="14" fill="#d2d2d2" textLength="56.3" lengthAdjust="spacingAndGlyphs">20 cd m-2</text><rect x="0" y="389" width="740" height="1" fill="#004444"/><text x="2.800" y="384.5" font-family="Liberation Serif,serif" font-size="14" fill="#d2d2d2" textLength="56.3" lengthAdjust="spacingAndGlyphs">40 cd m-2</text><rect x="0" y="302" width="740" height="1" fill="#004444"/><text x="2.800" y="298.3" font-family="Liberation Serif,serif" font-size="14" fill="#d2d2d2" textLength="56.3" lengthAdjust="spacingAndGlyphs">60 cd m-2</text><rect x="0" y="216" width="740" height="1" fill="#004444"/><text x="2.800" y="212.0" font-family="Liberation Serif,serif" font-size="14" fill="#d2d2d2" textLength="56.3" lengthAdjust="spacingAndGlyphs">80 cd m-2</text><rect x="0" y="130" width="740" height="1" fill="#004444"/><text x="2.800" y="125.7" font-family="Liberation Serif,serif" font-size="14" fill="#d2d2d2" textLength="63.3" lengthAdjust="spacingAndGlyphs">100 cd m-2</text><rect x="0" y="43" width="740" height="1" fill="#004444"/><text x="2.800" y="39.4" font-family="Liberation Serif,serif" font-size="14" fill="#d2d2d2" textLength="63.3" lengthAdjust="spacingAndGlyphs">120 cd m-2</text><path d="M3.5 561.2 L33.6 561.6 L70.8 559.9 L107.9 556.5 L145.1 551.0 L182.3 543.3 L219.5 533.0 L256.7 520.0 L293.8 504.1 L331.0 485.2 L368.2 463.1 L405.4 437.7 L442.6 408.8 L479.7 376.4 L516.9 340.2 L554.1 300.3 L591.3 256.4 L628.5 208.6 L665.6 156.6 L702.8 100.4 L740.0 40.0" fill="none" stroke="#ffff00" stroke-width="1.900"/><path d="M3.5 561.2 L33.6 561.6 L70.8 559.9 L107.9 556.5 L145.1 551.0 L182.3 543.3 L219.5 533.0 L256.7 520.0 L293.8 504.1 L331.0 485.2 L368.2 463.1 L405.4 437.7 L442.6 408.8 L479.7 376.4 L516.9 340.2 L554.1 300.3 L591.3 256.4 L628.5 208.6 L665.6 156.6 L702.8 100.4 L740.0 40.0" fill="none" stroke="#f0f0e0" stroke-width="0.800" stroke-dasharray="2 3.500"/><rect x="-0.5" y="557.2" width="8" height="8" fill="#e6e6e6"/><rect x="29.6" y="557.6" width="8" height="8" fill="#e6e6e6"/><rect x="66.8" y="555.9" width="8" height="8" fill="#e6e6e6"/><rect x="103.9" y="552.5" width="8" height="8" fill="#e6e6e6"/><rect x="141.1" y="547.0" width="8" height="8" fill="#e6e6e6"/><rect x="178.3" y="539.3" width="8" height="8" fill="#e6e6e6"/><rect x="215.5" y="529.0" width="8" height="8" fill="#e6e6e6"/><rect x="252.7" y="516.0" width="8" height="8" fill="#e6e6e6"/><rect x="289.8" y="500.1" width="8" height="8" fill="#e6e6e6"/><rect x="327.0" y="481.2" width="8" height="8" fill="#e6e6e6"/><rect x="364.2" y="459.1" width="8" height="8" fill="#e6e6e6"/><rect x="401.4" y="433.7" width="8" height="8" fill="#e6e6e6"/><rect x="438.6" y="404.8" width="8" height="8" fill="#e6e6e6"/><rect x="475.7" y="372.4" width="8" height="8" fill="#e6e6e6"/><rect x="512.9" y="336.2" width="8" height="8" fill="#e6e6e6"/><rect x="550.1" y="296.3" width="8" height="8" fill="#e6e6e6"/><rect x="587.3" y="252.4" width="8" height="8" fill="#e6e6e6"/><rect x="624.5" y="204.6" width="8" height="8" fill="#e6e6e6"/><rect x="661.6" y="152.6" width="8" height="8" fill="#e6e6e6"/><rect x="698.8" y="96.4" width="8" height="8" fill="#e6e6e6"/><rect x="736.0" y="36.0" width="8" height="8" fill="#e6e6e6"/><text x="383.0" y="14" font-family="Liberation Sans,sans-serif" font-weight="bold" font-size="15" fill="#dede00" text-anchor="middle" textLength="153" lengthAdjust="spacingAndGlyphs">Luminance Response</text><text x="76.5" y="558.4" font-family="Liberation Serif,serif" font-size="14" fill="#e0e0e0" textLength="62" lengthAdjust="spacingAndGlyphs">10% White</text><text x="150.5" y="558.4" font-family="Liberation Serif,serif" font-size="14" fill="#d6d6d6" textLength="62" lengthAdjust="spacingAndGlyphs">20% White</text><text x="224.5" y="558.4" font-family="Liberation Serif,serif" font-size="14" fill="#cccccc" textLength="62" lengthAdjust="spacingAndGlyphs">30% White</text><text x="298.5" y="558.4" font-family="Liberation Serif,serif" font-size="14" fill="#a2a2a2" textLength="62" lengthAdjust="spacingAndGlyphs">40% White</text><text x="372.5" y="558.4" font-family="Liberation Serif,serif" font-size="14" fill="#8a8a8a" textLength="62" lengthAdjust="spacingAndGlyphs">50% White</text><text x="446.5" y="558.4" font-family="Liberation Serif,serif" font-size="14" fill="#5a5a5a" textLength="62" lengthAdjust="spacingAndGlyphs">60% White</text><text x="520.5" y="558.4" font-family="Liberation Serif,serif" font-size="14" fill="#424242" textLength="62" lengthAdjust="spacingAndGlyphs">70% White</text><text x="594.5" y="558.4" font-family="Liberation Serif,serif" font-size="14" fill="#2a2a2a" textLength="62" lengthAdjust="spacingAndGlyphs">80% White</text><text x="668.5" y="558.4" font-family="Liberation Serif,serif" font-size="14" fill="#181818" textLength="62" lengthAdjust="spacingAndGlyphs">90% White</text><text x="730" y="519" font-family="Liberation Sans,sans-serif" font-weight="bold" font-size="15.500" fill="#919191" text-anchor="end" textLength="155" lengthAdjust="spacingAndGlyphs">hcfr.sourceforge.net</text></svg>
<div style="left:1146px;top:439px;width:748px;height:570px;background:#ffffff;border:solid;border-width:2px 0 0 2px;border-color:#a2a2a2;box-sizing:border-box;"></div>
<div style="left:1148px;top:441px;width:742px;height:564px;background:#6e6e6e;"></div>
<svg style="left:1150px;top:443px;overflow:hidden" width="740" height="562" viewBox="0 0 740 562"><defs><linearGradient id="cgG" x1="0" y1="0" x2="1" y2="0"><stop offset="0" stop-color="#202020"/><stop offset="1" stop-color="#ffffff"/></linearGradient></defs><rect width="740" height="562" fill="url(#cgG)"/><rect x="0" y="0" width="1" height="562" fill="#004444"/><rect x="74" y="0" width="1" height="562" fill="#004444"/><rect x="148" y="0" width="1" height="562" fill="#004444"/><rect x="222" y="0" width="1" height="562" fill="#004444"/><rect x="296" y="0" width="1" height="562" fill="#004444"/><rect x="370" y="0" width="1" height="562" fill="#004444"/><rect x="444" y="0" width="1" height="562" fill="#004444"/><rect x="518" y="0" width="1" height="562" fill="#004444"/><rect x="592" y="0" width="1" height="562" fill="#004444"/><rect x="666" y="0" width="1" height="562" fill="#004444"/><rect x="0" y="533" width="740" height="1" fill="#004444"/><text x="2.300" y="529.0" font-family="Liberation Serif,serif" font-size="14" fill="#d6d6d6" textLength="16.7" lengthAdjust="spacingAndGlyphs">1.1</text><rect x="0" y="505" width="740" height="1" fill="#004444"/><text x="2.300" y="501.0" font-family="Liberation Serif,serif" font-size="14" fill="#d6d6d6" textLength="16.7" lengthAdjust="spacingAndGlyphs">1.2</text><rect x="0" y="477" width="740" height="1" fill="#004444"/><text x="2.300" y="472.9" font-family="Liberation Serif,serif" font-size="14" fill="#d6d6d6" textLength="16.7" lengthAdjust="spacingAndGlyphs">1.3</text><rect x="0" y="449" width="740" height="1" fill="#004444"/><text x="2.300" y="444.9" font-family="Liberation Serif,serif" font-size="14" fill="#d6d6d6" textLength="16.7" lengthAdjust="spacingAndGlyphs">1.4</text><rect x="0" y="421" width="740" height="1" fill="#004444"/><text x="2.300" y="416.8" font-family="Liberation Serif,serif" font-size="14" fill="#d6d6d6" textLength="16.7" lengthAdjust="spacingAndGlyphs">1.5</text><rect x="0" y="393" width="740" height="1" fill="#004444"/><text x="2.300" y="388.7" font-family="Liberation Serif,serif" font-size="14" fill="#d6d6d6" textLength="16.7" lengthAdjust="spacingAndGlyphs">1.6</text><rect x="0" y="364" width="740" height="1" fill="#004444"/><text x="2.300" y="360.7" font-family="Liberation Serif,serif" font-size="14" fill="#d6d6d6" textLength="16.7" lengthAdjust="spacingAndGlyphs">1.7</text><rect x="0" y="336" width="740" height="1" fill="#004444"/><text x="2.300" y="332.6" font-family="Liberation Serif,serif" font-size="14" fill="#d6d6d6" textLength="16.7" lengthAdjust="spacingAndGlyphs">1.8</text><rect x="0" y="308" width="740" height="1" fill="#004444"/><text x="2.300" y="304.6" font-family="Liberation Serif,serif" font-size="14" fill="#d6d6d6" textLength="16.7" lengthAdjust="spacingAndGlyphs">1.9</text><rect x="0" y="280" width="740" height="1" fill="#004444"/><text x="2.300" y="276.5" font-family="Liberation Serif,serif" font-size="14" fill="#d6d6d6" textLength="6.8" lengthAdjust="spacingAndGlyphs">2</text><rect x="0" y="252" width="740" height="1" fill="#004444"/><text x="2.300" y="248.4" font-family="Liberation Serif,serif" font-size="14" fill="#d6d6d6" textLength="16.7" lengthAdjust="spacingAndGlyphs">2.1</text><rect x="0" y="224" width="740" height="1" fill="#004444"/><text x="2.300" y="220.4" font-family="Liberation Serif,serif" font-size="14" fill="#d6d6d6" textLength="16.7" lengthAdjust="spacingAndGlyphs">2.2</text><rect x="0" y="196" width="740" height="1" fill="#004444"/><text x="2.300" y="192.3" font-family="Liberation Serif,serif" font-size="14" fill="#d6d6d6" textLength="16.7" lengthAdjust="spacingAndGlyphs">2.3</text><rect x="0" y="168" width="740" height="1" fill="#004444"/><text x="2.300" y="164.3" font-family="Liberation Serif,serif" font-size="14" fill="#d6d6d6" textLength="16.7" lengthAdjust="spacingAndGlyphs">2.4</text><rect x="0" y="140" width="740" height="1" fill="#004444"/><text x="2.300" y="136.2" font-family="Liberation Serif,serif" font-size="14" fill="#d6d6d6" textLength="16.7" lengthAdjust="spacingAndGlyphs">2.5</text><rect x="0" y="112" width="740" height="1" fill="#004444"/><text x="2.300" y="108.1" font-family="Liberation Serif,serif" font-size="14" fill="#d6d6d6" textLength="16.7" lengthAdjust="spacingAndGlyphs">2.6</text><rect x="0" y="84" width="740" height="1" fill="#004444"/><text x="2.300" y="80.1" font-family="Liberation Serif,serif" font-size="14" fill="#d6d6d6" textLength="16.7" lengthAdjust="spacingAndGlyphs">2.7</text><rect x="0" y="56" width="740" height="1" fill="#004444"/><text x="2.300" y="52.0" font-family="Liberation Serif,serif" font-size="14" fill="#d6d6d6" textLength="16.7" lengthAdjust="spacingAndGlyphs">2.8</text><rect x="0" y="28" width="740" height="1" fill="#004444"/><text x="2.300" y="24.0" font-family="Liberation Serif,serif" font-size="14" fill="#d6d6d6" textLength="16.7" lengthAdjust="spacingAndGlyphs">2.9</text><rect x="29.0" y="165.0" width="8" height="8" fill="#ffff00"/><rect x="66.1" y="162.5" width="8" height="8" fill="#ffff00"/><rect x="103.3" y="165.0" width="8" height="8" fill="#ffff00"/><rect x="140.5" y="164.0" width="8" height="8" fill="#ffff00"/><rect x="177.7" y="163.5" width="8" height="8" fill="#ffff00"/><rect x="214.8" y="164.0" width="8" height="8" fill="#ffff00"/><rect x="252.0" y="163.0" width="8" height="8" fill="#ffff00"/><rect x="289.2" y="162.0" width="8" height="8" fill="#ffff00"/><rect x="326.3" y="166.0" width="8" height="8" fill="#ffff00"/><rect x="363.5" y="165.5" width="8" height="8" fill="#ffff00"/><rect x="400.7" y="164.5" width="8" height="8" fill="#ffff00"/><rect x="437.8" y="164.0" width="8" height="8" fill="#ffff00"/><rect x="475.0" y="165.5" width="8" height="8" fill="#ffff00"/><rect x="512.2" y="164.5" width="8" height="8" fill="#ffff00"/><rect x="549.4" y="166.0" width="8" height="8" fill="#ffff00"/><rect x="586.5" y="165.0" width="8" height="8" fill="#ffff00"/><rect x="623.7" y="166.0" width="8" height="8" fill="#ffff00"/><rect x="660.9" y="166.5" width="8" height="8" fill="#ffff00"/><rect x="698.0" y="163.0" width="8" height="8" fill="#ffff00"/><path d="M33.0 169.0 L70.1 166.5 L107.3 169.0 L144.5 168.0 L181.7 167.5 L218.8 168.0 L256.0 167.0 L293.2 166.0 L330.3 170.0 L367.5 169.5 L404.7 168.5 L441.8 168.0 L479.0 169.5 L516.2 168.5 L553.4 170.0 L590.5 169.0 L627.7 170.0 L664.9 170.5 L702.0 167.0" fill="none" stroke="#ffff00" stroke-width="1.900"/><path d="M33.0 168.3H702.0" fill="none" stroke="#f4f4f4" stroke-width="1" stroke-dasharray="2.500 3.500"/><rect x="29.0" y="164.3" width="8" height="8" fill="#e6e6e6"/><rect x="66.1" y="164.3" width="8" height="8" fill="#e6e6e6"/><rect x="103.3" y="164.3" width="8" height="8" fill="#e6e6e6"/><rect x="140.5" y="164.3" width="8" height="8" fill="#e6e6e6"/><rect x="177.7" y="164.3" width="8" height="8" fill="#e6e6e6"/><rect x="214.8" y="164.3" width="8" height="8" fill="#e6e6e6"/><rect x="252.0" y="164.3" width="8" height="8" fill="#e6e6e6"/><rect x="289.2" y="164.3" width="8" height="8" fill="#e6e6e6"/><rect x="326.3" y="164.3" width="8" height="8" fill="#e6e6e6"/><rect x="363.5" y="164.3" width="8" height="8" fill="#e6e6e6"/><rect x="400.7" y="164.3" width="8" height="8" fill="#e6e6e6"/><rect x="437.8" y="164.3" width="8" height="8" fill="#e6e6e6"/><rect x="475.0" y="164.3" width="8" height="8" fill="#e6e6e6"/><rect x="512.2" y="164.3" width="8" height="8" fill="#e6e6e6"/><rect x="549.4" y="164.3" width="8" height="8" fill="#e6e6e6"/><rect x="586.5" y="164.3" width="8" height="8" fill="#e6e6e6"/><rect x="623.7" y="164.3" width="8" height="8" fill="#e6e6e6"/><rect x="660.9" y="164.3" width="8" height="8" fill="#e6e6e6"/><rect x="698.0" y="164.3" width="8" height="8" fill="#e6e6e6"/><text x="382.0" y="14" font-family="Liberation Sans,sans-serif" font-weight="bold" font-size="15" fill="#dede00" text-anchor="middle" textLength="103" lengthAdjust="spacingAndGlyphs">EOTF(Gamma)</text><text x="76.5" y="558.4" font-family="Liberation Serif,serif" font-size="14" fill="#e0e0e0" textLength="62" lengthAdjust="spacingAndGlyphs">10% White</text><text x="150.5" y="558.4" font-family="Liberation Serif,serif" font-size="14" fill="#d6d6d6" textLength="62" lengthAdjust="spacingAndGlyphs">20% White</text><text x="224.5" y="558.4" font-family="Liberation Serif,serif" font-size="14" fill="#cccccc" textLength="62" lengthAdjust="spacingAndGlyphs">30% White</text><text x="298.5" y="558.4" font-family="Liberation Serif,serif" font-size="14" fill="#a2a2a2" textLength="62" lengthAdjust="spacingAndGlyphs">40% White</text><text x="372.5" y="558.4" font-family="Liberation Serif,serif" font-size="14" fill="#8a8a8a" textLength="62" lengthAdjust="spacingAndGlyphs">50% White</text><text x="446.5" y="558.4" font-family="Liberation Serif,serif" font-size="14" fill="#5a5a5a" textLength="62" lengthAdjust="spacingAndGlyphs">60% White</text><text x="520.5" y="558.4" font-family="Liberation Serif,serif" font-size="14" fill="#424242" textLength="62" lengthAdjust="spacingAndGlyphs">70% White</text><text x="594.5" y="558.4" font-family="Liberation Serif,serif" font-size="14" fill="#2a2a2a" textLength="62" lengthAdjust="spacingAndGlyphs">80% White</text><text x="668.5" y="558.4" font-family="Liberation Serif,serif" font-size="14" fill="#181818" textLength="62" lengthAdjust="spacingAndGlyphs">90% White</text><text x="730" y="519" font-family="Liberation Sans,sans-serif" font-weight="bold" font-size="15.500" fill="#919191" text-anchor="end" textLength="155" lengthAdjust="spacingAndGlyphs">hcfr.sourceforge.net</text></svg>
<div style="left:2px;top:1017px;width:1895px;height:2px;background:#6e6e6e;"></div>
<div style="left:2px;top:1019px;width:1895px;height:2.7px;background:#b4b4b4;"></div>
<div style="left:2px;top:1022px;width:1916px;height:20px;background:#f0f0f0;"></div>
<div style="left:19px;top:1030px;width:1825px;height:2px;background:#868686;"></div>
<div style="left:0px;top:1042px;width:1920px;height:1px;background:#000;"></div>
<div style="left:0px;top:1043px;width:1920px;height:19px;background:#f0f0f0;"></div>
<div style="left:0px;top:1042px;width:54px;height:20px;background:#000;"></div>
<div style="left:1px;top:1043px;width:17px;height:18px;background:#f0f0f0;border:1px solid;border-color:#fff #8a8a8a #8a8a8a #fff;box-sizing:border-box;"></div>
<div style="left:18px;top:1043px;width:17px;height:18px;background:#f0f0f0;border:1px solid;border-color:#fff #8a8a8a #8a8a8a #fff;box-sizing:border-box;"></div>
<div style="left:36px;top:1043px;width:17px;height:18px;background:#f0f0f0;border:1px solid;border-color:#fff #8a8a8a #8a8a8a #fff;box-sizing:border-box;"></div>
<svg style="left:5px;top:1047px" width="9" height="9" viewBox="0 0 9 9"><path d="M.500 .500l8 8M8.500 .500l-8 8" stroke="#000" stroke-width="1.300" fill="none"/></svg>
<svg style="left:24px;top:1048px" width="5" height="8" viewBox="0 0 5 8"><path d="M4.500 0v8l-4.500-4z" fill="#000"/></svg>
<svg style="left:42px;top:1048px" width="5" height="8" viewBox="0 0 5 8"><path d="M.500 0v8l4.500-4z" fill="#000"/></svg>
<svg style="left:0;top:1036px" width="340" height="30" viewBox="0 1036 340 30"><path d="M55 1042l8 18h57l8-18z" fill="#fff"/><path d="M55 1042.500l8 17.500h57l8-17.500" fill="none" stroke="#000" stroke-width="1.100"/><path d="M123.400 1052l3.400 8h61l3.400-8" fill="none" stroke="#000" stroke-width="1.100"/><path d="M187 1042.500l8 17.500h44l3.600-8" fill="none" stroke="#000" stroke-width="1.100"/><path d="M238.400 1042.500l8 17.500h67l8-17.500" fill="none" stroke="#000" stroke-width="1.100"/></svg>
<div style="left:55px;top:1042px;width:73px;height:1px;background:#f8f8f8;"></div>
<span style="left:66.50px;top:1044.00px;font:bold 11px/15px 'Liberation Sans',sans-serif;color:#000;white-space:pre;letter-spacing:-0.219px;-webkit-text-stroke:0.3px #000;">Measures</span>
<span style="left:134.00px;top:1045.00px;font:10px/14px 'Liberation Sans',sans-serif;color:#000;white-space:pre;letter-spacing:-0.436px;">Luminance</span>
<span style="left:200.00px;top:1045.00px;font:10px/14px 'Liberation Sans',sans-serif;color:#000;white-space:pre;letter-spacing:-0.613px;">Gamma</span>
<span style="left:255.00px;top:1045.00px;font:10px/14px 'Liberation Sans',sans-serif;color:#000;white-space:pre;letter-spacing:-0.336px;">RGB Levels</span>
<svg style="left:1751px;top:1044px" width="16" height="15" viewBox="0 0 16 15"><path d="M1 1.500c0-.8.500-1 1-1h11c.8 0 1 .3 1 1v7l-1.500 5h-3l-1-2-1 2h-4l-1.500-5z" fill="#7a7a10" stroke="#3a3a00" stroke-width=".8"/><rect x="3" y="3" width="8" height="5" fill="#e01020"/><path d="M4 6c2-2 4-2 5-1v-1.500l2 2.500-2 1.500v-1c-1.500-.5-3 0-5 .5z" fill="#fff"/><circle cx="10.500" cy="11" r="2.200" fill="#f0e000"/></svg>
<div style="left:1846px;top:1044px;width:12px;height:12px;background:#fff;border:solid;border-width:1px;border-color:#8a8a8a #f4f4f4 #f4f4f4 #8a8a8a;box-sizing:border-box;"></div>
<div style="left:1847px;top:1045px;width:10px;height:10px;border:solid;border-width:1px;border-color:#5c5c5c #e0e0e0 #e0e0e0 #5c5c5c;box-sizing:border-box;"></div>
<span style="left:1864.00px;top:1043.00px;font:11.5px/16px 'Liberation Sans',sans-serif;color:#000;white-space:pre;letter-spacing:-0.340px;">Reference</span>
<div style="left:0px;top:1061px;width:1920px;height:18px;background:#e9eef8;"></div>
<div style="left:0px;top:1078px;width:1920px;height:2px;background:#2a2a2a;"></div>
<span style="left:2.00px;top:1064.00px;font:12px/17px 'Liberation Sans',sans-serif;color:#000;white-space:pre;letter-spacing:-0.538px;">Ready</span>
<div style="left:1742px;top:1062px;width:75px;height:16px;background:#eef2fa;border:1px solid #b9cbe6;border-bottom:0;box-sizing:border-box;"></div>
<div style="left:1820px;top:1062px;width:28px;height:16px;background:#eef2fa;border:1px solid #b9cbe6;border-bottom:0;box-sizing:border-box;"></div>
<div style="left:1851px;top:1062px;width:33px;height:16px;background:#eef2fa;border:1px solid #b9cbe6;border-bottom:0;box-sizing:border-box;"></div>
<div style="left:1887px;top:1062px;width:33px;height:16px;background:#eef2fa;border:1px solid #b9cbe6;border-bottom:0;box-sizing:border-box;"></div>
<span style="left:1854.00px;top:1064.00px;font:12px/17px 'Liberation Sans',sans-serif;color:#000;white-space:pre;letter-spacing:-0.110px;">NUM</span>
</div></body></html>
